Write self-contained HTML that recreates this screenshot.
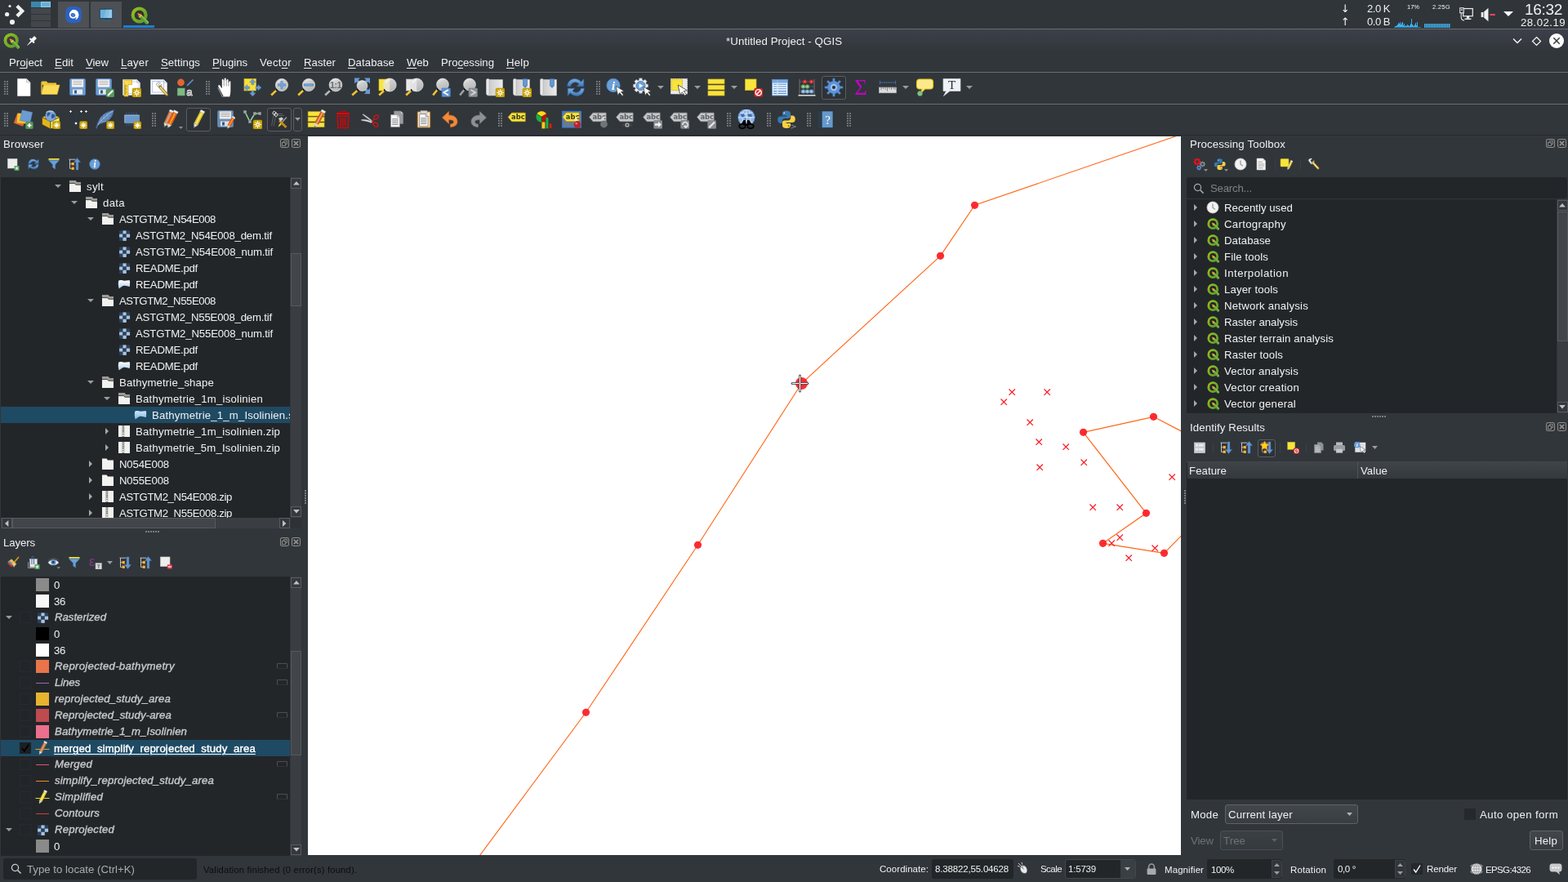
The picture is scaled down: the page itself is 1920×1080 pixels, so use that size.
<!DOCTYPE html>
<html lang="en"><head><meta charset="utf-8"><title>*Untitled Project - QGIS</title>
<style>
html,body{margin:0;padding:0;background:#31363b;}
body{width:1920px;height:1080px;overflow:hidden;font-family:"Liberation Sans",sans-serif;}
#root{will-change:transform;position:relative;width:1920px;height:1080px;overflow:hidden;background:#31363b;}
#root>div,#root>svg,#root>span{position:absolute;display:block;}
.t{white-space:pre;}
u{text-decoration:underline;text-underline-offset:2px;text-decoration-thickness:1px;}
</style></head>
<body>
<svg width="0" height="0" style="position:absolute"><defs>
<linearGradient id="gq" x1="0" y1="0" x2="1" y2="1"><stop offset="0" stop-color="#93c01f"/><stop offset="1" stop-color="#5e9b2c"/></linearGradient>
<linearGradient id="glens" x1="0.2" y1="0" x2="0.7" y2="1"><stop offset="0" stop-color="#eeeeee"/><stop offset="0.35" stop-color="#cdcdcd"/><stop offset="1" stop-color="#b4b6b8"/></linearGradient>
<linearGradient id="gscroll" x1="0" y1="0" x2="1" y2="0"><stop offset="0" stop-color="#f4f4f4"/><stop offset="0.25" stop-color="#cfcfcf"/><stop offset="1" stop-color="#ececec"/></linearGradient>
<linearGradient id="gblue" x1="0" y1="0" x2="0" y2="1"><stop offset="0" stop-color="#7fb0e0"/><stop offset="1" stop-color="#3d78b8"/></linearGradient>
<linearGradient id="gv" x1="0" y1="0" x2="0" y2="1"><stop offset="0" stop-color="#ffffff"/><stop offset="1" stop-color="#a9cbea"/></linearGradient>
<linearGradient id="gv2" x1="0" y1="0" x2="0" y2="1"><stop offset="0" stop-color="#cfe6fa"/><stop offset="1" stop-color="#7db6e6"/></linearGradient>
</defs></svg>
<div id="root">
<div style="left:0px;top:0px;width:1920px;height:35px;background:#303539;"></div>
<div style="left:0px;top:35px;width:1920px;height:1px;background:#696c71;"></div>
<svg style="left:4px;top:4px;" width="28" height="28" viewBox="0 0 28 28"><circle cx="8" cy="3.5" r="1.6" fill="#f0f0f1"/><circle cx="4.6" cy="13.5" r="2.6" fill="#f0f0f1"/><circle cx="11" cy="23" r="3.1" fill="#f0f0f1"/><path d="M18.3 1.8L26.2 9.5L18.5 17.2L15.4 14.2L20.2 9.5L15.4 4.8Z" fill="#f0f0f1"/></svg>
<div style="left:38px;top:2px;width:24px;height:7px;background:#3a87ad;"></div>
<div style="left:50px;top:2px;width:12px;height:7px;background:#67b0d6;box-sizing:border-box;border:1px solid #8fcbe8;"></div>
<div style="left:38px;top:10px;width:24px;height:7px;background:#43474c;"></div>
<div style="left:38px;top:18px;width:24px;height:7px;background:#43474c;"></div>
<div style="left:38px;top:26px;width:24px;height:7px;background:#43474c;"></div>
<div style="left:71px;top:2px;width:38px;height:32px;background:#4d5156;"></div>
<div style="left:111px;top:2px;width:38px;height:32px;background:#4d5156;"></div>
<div style="left:151px;top:31px;width:38px;height:3px;background:#1d7fd1;"></div>
<svg style="left:79.0px;top:7.0px;" width="22" height="22" viewBox="0 0 24 24"><rect x="1.5" y="1" width="21" height="22" rx="7" fill="#2a62c4"/><path d="M12 5.2C16.6 5.2 19.2 8.6 19 12.6C18.8 16.6 16 18.8 14.4 18.6C15.6 17.6 16 16.2 15.6 15C14.8 16.6 12.6 17.4 10.4 17C8 16.6 6.4 14.6 6.4 11.8C6.4 9.6 7.4 8.2 8.4 7.4C9 6.6 10.4 5.2 12 5.2Z" fill="#ffffff"/><path d="M8.5 10.5C10 9.6 12.4 9.8 13.8 11C14.8 12 14.6 13.8 13.4 14.6C11.8 15.4 9.6 15 8.6 13.6C8.2 12.6 8.2 11.4 8.5 10.5Z" fill="#2a62c4"/><path d="M9.4 11.4L11.4 13L13.4 11.6" stroke="#9cc0f0" stroke-width="0.8" fill="none"/></svg>
<svg style="left:119.0px;top:7.0px;" width="22" height="22" viewBox="0 0 24 24"><rect x="3.5" y="4.5" width="17" height="12.5" rx="0.6" fill="#6fb0dc" stroke="#1f4a5e" stroke-width="1.2"/><path d="M12 5.2H16.5L13.5 16.4H9Z" fill="#8fc4e6" opacity="0.7"/><path d="M16.5 5.2H19.8V16.4H13.5Z" fill="#9fd0ee" opacity="0.8"/><rect x="9.5" y="17.6" width="5" height="1.4" fill="#1f4a5e"/><rect x="7" y="19" width="10" height="1.6" fill="#3a5f73"/></svg>
<svg style="left:159.5px;top:7.5px;" width="22" height="22" viewBox="0 0 24 24"><circle cx="11.6" cy="11.4" r="8.7" fill="none" stroke="url(#gq)" stroke-width="4.5"/><g transform="translate(11.4 11.2) rotate(45)"><path d="M2.6 -2.3H16.6V2.3H2.6Z" fill="#5f9e35"/><path d="M2.6 -2.3H16.6V-0.4H2.6Z" fill="#86bd4c"/><path d="M-3.4 0L1.6 -2.3V2.3Z" fill="#f47b1c"/><path d="M1.4 -2.3H3V2.3H1.4Z" fill="#f8cf3a"/><path d="M-3.4 0L1.6 -2.3V-0.6Z" fill="#f9a04a"/></g></svg>
<span class="t" style="left:1641.8px;top:0.5px;line-height:20px;font-size:13px;color:#f4f5f6;font-family:'DejaVu Sans','Liberation Sans',sans-serif;">↓</span>
<span class="t" style="left:1641.8px;top:16.5px;line-height:20px;font-size:13px;color:#f4f5f6;font-family:'DejaVu Sans','Liberation Sans',sans-serif;">↑</span>
<span class="t" style="left:1674px;top:1px;line-height:20px;font-size:13px;color:#eff0f1;letter-spacing:-0.47px;">2.0 K</span>
<span class="t" style="left:1674px;top:17px;line-height:20px;font-size:13px;color:#eff0f1;letter-spacing:-0.47px;">0.0 B</span>
<span class="t" style="left:1723px;top:-1px;line-height:20px;font-size:7.5px;color:#eff0f1;letter-spacing:-0.01px;">17%</span>
<span class="t" style="left:1754px;top:-1px;line-height:20px;font-size:7.5px;color:#eff0f1;letter-spacing:0.31px;">2.25G</span>
<svg style="left:1707px;top:22px;" width="33" height="12" viewBox="0 0 33 12"><rect x="1" y="10" width="1" height="1" fill="#3daee9"/><rect x="2" y="10" width="1" height="1" fill="#3daee9"/><rect x="3" y="9" width="1" height="2" fill="#3daee9"/><rect x="4" y="8" width="1" height="3" fill="#3daee9"/><rect x="5" y="6" width="1" height="5" fill="#3daee9"/><rect x="6" y="7" width="1" height="4" fill="#3daee9"/><rect x="7" y="5" width="1" height="6" fill="#3daee9"/><rect x="8" y="8" width="1" height="3" fill="#3daee9"/><rect x="9" y="6" width="1" height="5" fill="#3daee9"/><rect x="10" y="5" width="1" height="6" fill="#3daee9"/><rect x="11" y="9" width="1" height="2" fill="#3daee9"/><rect x="12" y="7" width="1" height="4" fill="#3daee9"/><rect x="13" y="10" width="1" height="1" fill="#3daee9"/><rect x="14" y="9" width="1" height="2" fill="#3daee9"/><rect x="15" y="10" width="1" height="1" fill="#3daee9"/><rect x="16" y="8" width="1" height="3" fill="#3daee9"/><rect x="17" y="9" width="1" height="2" fill="#3daee9"/><rect x="18" y="10" width="1" height="1" fill="#3daee9"/><rect x="19" y="9" width="1" height="2" fill="#3daee9"/><rect x="20" y="7" width="1" height="4" fill="#3daee9"/><rect x="21" y="1" width="1" height="10" fill="#3daee9"/><rect x="22" y="8" width="1" height="3" fill="#3daee9"/><rect x="23" y="9" width="1" height="2" fill="#3daee9"/><rect x="24" y="10" width="1" height="1" fill="#3daee9"/><rect x="25" y="8" width="1" height="3" fill="#3daee9"/><rect x="26" y="6" width="1" height="5" fill="#3daee9"/><rect x="27" y="9" width="1" height="2" fill="#3daee9"/><rect x="28" y="5" width="1" height="6" fill="#3daee9"/><rect x="0" y="11" width="33" height="1" fill="#2a7fb0"/></svg>
<svg style="left:1744px;top:29px;" width="33" height="5" viewBox="0 0 33 5"><rect x="0" y="0" width="1.5" height="5" fill="#3daee9"/><rect x="2" y="0" width="1.5" height="5" fill="#3daee9"/><rect x="4" y="0" width="1.5" height="5" fill="#3daee9"/><rect x="6" y="0" width="1.5" height="5" fill="#3daee9"/><rect x="8" y="0" width="1.5" height="5" fill="#3daee9"/><rect x="10" y="0" width="1.5" height="5" fill="#3daee9"/><rect x="12" y="0" width="1.5" height="5" fill="#3daee9"/><rect x="14" y="0" width="1.5" height="5" fill="#3daee9"/><rect x="16" y="0" width="1.5" height="5" fill="#3daee9"/><rect x="18" y="0" width="1.5" height="5" fill="#3daee9"/><rect x="20" y="0" width="1.5" height="5" fill="#3daee9"/><rect x="22" y="0" width="1.5" height="5" fill="#3daee9"/><rect x="24" y="0" width="1.5" height="5" fill="#3daee9"/><rect x="26" y="0" width="1.5" height="5" fill="#3daee9"/><rect x="28" y="0" width="1.5" height="5" fill="#3daee9"/><rect x="30" y="0" width="1.5" height="5" fill="#3daee9"/></svg>
<svg style="left:1785.5px;top:8.0px;" width="19" height="19" viewBox="0 0 24 24"><rect x="7.2" y="3.2" width="14.6" height="11.6" fill="none" stroke="#eff0f1" stroke-width="1.5"/><rect x="12.5" y="15" width="4" height="3.4" fill="#eff0f1"/><rect x="9.5" y="18.4" width="10" height="1.8" fill="#eff0f1"/><rect x="2.2" y="2.2" width="5.6" height="7.6" fill="#303539" stroke="#eff0f1" stroke-width="1.3"/><rect x="4" y="4.2" width="2" height="2" fill="#eff0f1"/><path d="M4 10V16.5C4 19.5 6 21.5 9 21.5" stroke="#eff0f1" stroke-width="1.3" fill="none"/></svg>
<svg style="left:1811.5px;top:8.0px;" width="20" height="20" viewBox="0 0 24 24"><path d="M2 8.5H5.5L12.5 2V22L5.5 15.5H2Z" fill="#eff0f1"/><path d="M5.8 8.5V15.5" stroke="#303539" stroke-width="1"/><rect x="15" y="10.7" width="7.5" height="2.6" fill="#e8445a"/></svg>
<svg style="left:1841.0px;top:14.0px;" width="12" height="6" viewBox="0 0 12 6"><path d="M0 0H12L6.0 6Z" fill="#fcfcfc"/></svg>
<span class="t" style="left:1867px;top:1.5px;line-height:20px;font-size:19px;color:#eff0f1;letter-spacing:-0.31px;">16:32</span>
<span class="t" style="left:1862px;top:17.5px;line-height:20px;font-size:13.2px;color:#eff0f1;letter-spacing:0.46px;">28.02.19</span>
<div style="left:0px;top:36px;width:1920px;height:28px;background:linear-gradient(#3c4049,#31363b);"></div>
<svg style="left:4.0px;top:40.0px;" width="20" height="20" viewBox="0 0 24 24"><circle cx="11.6" cy="11.4" r="8.7" fill="none" stroke="url(#gq)" stroke-width="4.5"/><g transform="translate(11.4 11.2) rotate(45)"><path d="M2.6 -2.3H16.6V2.3H2.6Z" fill="#5f9e35"/><path d="M2.6 -2.3H16.6V-0.4H2.6Z" fill="#86bd4c"/><path d="M-3.4 0L1.6 -2.3V2.3Z" fill="#f47b1c"/><path d="M1.4 -2.3H3V2.3H1.4Z" fill="#f8cf3a"/><path d="M-3.4 0L1.6 -2.3V-0.6Z" fill="#f9a04a"/></g></svg>
<svg style="left:31.5px;top:42.5px;" width="14" height="14" viewBox="0 0 24 24"><g transform="rotate(45 12 12)"><rect x="8.4" y="1" width="7.2" height="9" rx="1.2" fill="#fcfcfc"/><rect x="5.6" y="9.6" width="12.8" height="3.6" rx="0.6" fill="#fcfcfc"/><path d="M10.6 13H13.4L12 25Z" fill="#fcfcfc" stroke="#fcfcfc" stroke-width="0.8"/></g></svg>
<span class="t" style="left:889px;top:41px;line-height:20px;font-size:13.3px;color:#eff0f1;letter-spacing:0.07px;">*Untitled Project - QGIS</span>
<svg style="left:1852px;top:45px;" width="12" height="10" viewBox="0 0 12 10"><path d="M1 2.5L6 7.5L11 2.5" fill="none" stroke="#fcfcfc" stroke-width="1.3"/></svg>
<svg style="left:1875px;top:44px;" width="13" height="13" viewBox="0 0 13 13"><path d="M6.5 1.5L11.5 6.5L6.5 11.5L1.5 6.5Z" fill="none" stroke="#fcfcfc" stroke-width="1.2"/></svg>
<svg style="left:1897px;top:41px;" width="18" height="18" viewBox="0 0 18 18"><circle cx="9" cy="9" r="9" fill="#fcfcfc"/><path d="M5.3 5.3L12.7 12.7M12.7 5.3L5.3 12.7" stroke="#31363b" stroke-width="1.4"/></svg>
<span class="t" style="left:11px;top:67px;line-height:20px;font-size:13.2px;color:#eff0f1;letter-spacing:-0.01px;">Pr<u>o</u>ject</span>
<span class="t" style="left:67px;top:67px;line-height:20px;font-size:13.2px;color:#eff0f1;letter-spacing:0.07px;"><u>E</u>dit</span>
<span class="t" style="left:105px;top:67px;line-height:20px;font-size:13.2px;color:#eff0f1;letter-spacing:-0.09px;"><u>V</u>iew</span>
<span class="t" style="left:148px;top:67px;line-height:20px;font-size:13.2px;color:#eff0f1;letter-spacing:0.2px;"><u>L</u>ayer</span>
<span class="t" style="left:197px;top:67px;line-height:20px;font-size:13.2px;color:#eff0f1;letter-spacing:0.04px;"><u>S</u>ettings</span>
<span class="t" style="left:260px;top:67px;line-height:20px;font-size:13.2px;color:#eff0f1;letter-spacing:-0.04px;"><u>P</u>lugins</span>
<span class="t" style="left:318px;top:67px;line-height:20px;font-size:13.2px;color:#eff0f1;letter-spacing:0.27px;">Vect<u>o</u>r</span>
<span class="t" style="left:372px;top:67px;line-height:20px;font-size:13.2px;color:#eff0f1;letter-spacing:0.03px;"><u>R</u>aster</span>
<span class="t" style="left:426px;top:67px;line-height:20px;font-size:13.2px;color:#eff0f1;letter-spacing:0.07px;"><u>D</u>atabase</span>
<span class="t" style="left:498px;top:67px;line-height:20px;font-size:13.2px;color:#eff0f1;letter-spacing:0.04px;"><u>W</u>eb</span>
<span class="t" style="left:540px;top:67px;line-height:20px;font-size:13.2px;color:#eff0f1;letter-spacing:-0.03px;">Pro<u>c</u>essing</span>
<span class="t" style="left:620px;top:67px;line-height:20px;font-size:13.2px;color:#eff0f1;letter-spacing:0.22px;"><u>H</u>elp</span>
<div style="left:0px;top:88px;width:1920px;height:1px;background:#6b6e72;"></div>
<div style="left:0px;top:127px;width:1920px;height:1px;background:#6b6e72;"></div>
<div style="left:0px;top:165px;width:1920px;height:1px;background:#26292d;"></div>
<svg style="left:5px;top:99px;" width="5" height="17" viewBox="0 0 5 17"><rect x="0" y="0" width="2" height="2" fill="#6f7377"/><rect x="3" y="0" width="2" height="2" fill="#6f7377"/><rect x="0" y="3" width="2" height="2" fill="#6f7377"/><rect x="3" y="3" width="2" height="2" fill="#6f7377"/><rect x="0" y="6" width="2" height="2" fill="#6f7377"/><rect x="3" y="6" width="2" height="2" fill="#6f7377"/><rect x="0" y="9" width="2" height="2" fill="#6f7377"/><rect x="3" y="9" width="2" height="2" fill="#6f7377"/><rect x="0" y="12" width="2" height="2" fill="#6f7377"/><rect x="3" y="12" width="2" height="2" fill="#6f7377"/><rect x="0" y="15" width="2" height="2" fill="#6f7377"/><rect x="3" y="15" width="2" height="2" fill="#6f7377"/></svg>
<svg style="left:17.0px;top:95.0px;" width="24" height="24" viewBox="0 0 24 24"><path d="M4.5 1.5H15.5L20 6V22.5H4.5Z" fill="#ffffff" stroke="#d0d0d0" stroke-width="0.8"/><path d="M15.5 1.5V6H20" fill="#e4e4e4" stroke="#bdbdbd" stroke-width="0.7"/></svg>
<svg style="left:50.0px;top:95.0px;" width="24" height="24" viewBox="0 0 24 24"><path d="M1 4.5H7L8.5 6.5H19V9H1Z" fill="#edc53a"/><path d="M1 6V20.5H20L23 9H3.5L1 18Z" fill="#fbdc55" stroke="#e2b935" stroke-width="0.6" stroke-linejoin="round"/><path d="M1 5V20.5" stroke="#e6bd38" stroke-width="0.8"/></svg>
<svg style="left:83.0px;top:95.0px;" width="24" height="24" viewBox="0 0 24 24"><rect x="2.5" y="1.5" width="19" height="20" rx="1.5" fill="#6d9dd2" stroke="#4f7fb6" stroke-width="1"/><rect x="5" y="2.5" width="14" height="9" fill="#f6f6f6" stroke="#d4d4d4" stroke-width="0.5"/><path d="M6.5 4.5h11M6.5 6.5h11M6.5 8.5h11" stroke="#8a8a8a" stroke-width="0.6"/><rect x="6" y="14.5" width="12" height="6" fill="#eaeaea"/><rect x="8" y="15.5" width="3" height="4" fill="#2f5f95"/></svg>
<svg style="left:116.0px;top:95.0px;" width="24" height="24" viewBox="0 0 24 24"><g transform="translate(-1 0)"><rect x="2.5" y="1.5" width="19" height="20" rx="1.5" fill="#6d9dd2" stroke="#4f7fb6" stroke-width="1"/><rect x="5" y="2.5" width="14" height="9" fill="#f6f6f6" stroke="#d4d4d4" stroke-width="0.5"/><path d="M6.5 4.5h11M6.5 6.5h11M6.5 8.5h11" stroke="#8a8a8a" stroke-width="0.6"/><rect x="6" y="14.5" width="12" height="6" fill="#eaeaea"/><rect x="8" y="15.5" width="3" height="4" fill="#2f5f95"/></g><rect x="14" y="14" width="10" height="10" rx="1.8" fill="#5a9a5f" stroke="#3f7f48" stroke-width="0.6"/><path d="M16.5 21.5L21.5 16.5" stroke="#fff" stroke-width="2" stroke-linecap="round"/></svg>
<svg style="left:149.0px;top:95.0px;" width="24" height="24" viewBox="0 0 24 24"><path d="M1.5 2.5H18.5L22.5 6.5V21.5H1.5Z" fill="#ffffff" stroke="#c8c8c8" stroke-width="0.7"/><path d="M18.5 2.5V6.5H22.5" fill="#eeeeee" stroke="#bdbdbd" stroke-width="0.6"/><path d="M4 5H21V19.5H4Z" fill="none" stroke="#b9c9f0" stroke-width="0.8"/><path d="M3 3H12.5V8.5H8V23H3Z" fill="#f8d84a" stroke="#c9a21a" stroke-width="0.7"/><path d="M3.5 3.5L8 8" stroke="#fbe9a0" stroke-width="0.7"/><path d="M3.4 10h2.8M3.4 12h2M3.4 14h2.8M3.4 16h2M3.4 18h2.8M3.4 20h2" stroke="#6a5408" stroke-width="0.7"/><rect x="13" y="13" width="11" height="11" rx="1.8" fill="#c9a300" stroke="#b08e00" stroke-width="0.5"/><path d="M14.10 18.50L22.90 18.50M15.64 15.64L21.36 21.36M18.50 14.10L18.50 22.90M21.36 15.64L15.64 21.36" stroke="#fffbe8" stroke-width="1.05" fill="none"/><circle cx="18.5" cy="18.5" r="2.20" fill="#fffbe8"/><circle cx="18.5" cy="18.5" r="1.10" fill="#c9a300"/></svg>
<svg style="left:182.0px;top:95.0px;" width="24" height="24" viewBox="0 0 24 24"><path d="M2.5 2.5H18.5L22.5 6.5V20.5H2.5Z" fill="#ffffff" stroke="#c8c8c8" stroke-width="0.7"/><path d="M18.5 2.5V6.5H22.5" fill="#e8e8e8" stroke="#bdbdbd" stroke-width="0.6"/><rect x="4.5" y="4.5" width="14" height="13.5" fill="none" stroke="#a8bdf2" stroke-width="0.9"/><path d="M9.5 8.5A3 3 0 0 1 14.6 6.4L12.4 8.6L13.6 10.2L16 8A3 3 0 0 1 13 11.8L11.4 11.2Z" fill="#e9e9e9" stroke="#8a8a8a" stroke-width="0.6"/><path d="M14 11.5L22.5 21" stroke="#8a6d1c" stroke-width="3.4" stroke-linecap="round"/><path d="M14.4 12L22 20.6" stroke="#ecd27a" stroke-width="2" stroke-linecap="round"/></svg>
<svg style="left:215.0px;top:95.0px;" width="24" height="24" viewBox="0 0 24 24"><circle cx="6.5" cy="6" r="4.4" fill="#e0672f"/><path d="M14 10L21.5 2.5" stroke="#5a8fd0" stroke-width="1.7"/><rect x="2.2" y="13" width="9" height="9" fill="#7fb983" stroke="#5d9b66" stroke-width="0.5"/><text x="13.3" y="22" font-family="Liberation Sans, sans-serif" font-size="13" fill="none" stroke="#f3f3f3" stroke-width="0.75">a</text></svg>
<svg style="left:252px;top:99px;" width="5" height="17" viewBox="0 0 5 17"><rect x="0" y="0" width="2" height="2" fill="#6f7377"/><rect x="3" y="0" width="2" height="2" fill="#6f7377"/><rect x="0" y="3" width="2" height="2" fill="#6f7377"/><rect x="3" y="3" width="2" height="2" fill="#6f7377"/><rect x="0" y="6" width="2" height="2" fill="#6f7377"/><rect x="3" y="6" width="2" height="2" fill="#6f7377"/><rect x="0" y="9" width="2" height="2" fill="#6f7377"/><rect x="3" y="9" width="2" height="2" fill="#6f7377"/><rect x="0" y="12" width="2" height="2" fill="#6f7377"/><rect x="3" y="12" width="2" height="2" fill="#6f7377"/><rect x="0" y="15" width="2" height="2" fill="#6f7377"/><rect x="3" y="15" width="2" height="2" fill="#6f7377"/></svg>
<svg style="left:264.0px;top:95.0px;" width="24" height="24" viewBox="0 0 24 24"><path d="M9.6 23.6L3.2 11.6C2 9.2 4.2 7.6 5.8 9.6L7.4 12.4V3.2C7.4 1 10.2 1 10.2 3.2V2C10.2 -0.2 13.2 -0.2 13.2 2V3.2C13.2 1.2 16 1.2 16 3.2V5.4C16 3.6 18.8 3.6 18.8 5.6V15C18.8 18.4 18.2 21 17.6 23.6Z" fill="#ffffff" stroke="#1f1f1f" stroke-width="0.7" stroke-linejoin="round"/><path d="M10.2 3V10.5M13.2 2.5V10.5M16 4V10.5" stroke="#6a6a6a" stroke-width="0.7"/><path d="M2.8 12.4L8.6 23.9H17.4" fill="none" stroke="#e8e8e8" stroke-width="0.6"/></svg>
<svg style="left:297.0px;top:95.0px;" width="24" height="24" viewBox="0 0 24 24"><rect x="2" y="1.5" width="14.5" height="14.5" fill="#f6e03a" stroke="#d2b51e" stroke-width="0.7"/><g transform="translate(1.2 1.2) scale(0.93)"><path d="M12 0.5L16 5H13.5V8H10.5V5H8Z" fill="#6a9ad0" stroke="#4f80b8" stroke-width="0.5"/><path d="M12 23.5L16 19H13.5V16H10.5V19H8Z" fill="#6a9ad0" stroke="#4f80b8" stroke-width="0.5"/><path d="M23.5 12L19 8V10.5H16V13.5H19V16Z" fill="#6a9ad0" stroke="#4f80b8" stroke-width="0.5"/><path d="M0.5 12L5 8V10.5H8V13.5H5V16Z" fill="#6a9ad0" stroke="#4f80b8" stroke-width="0.5"/></g></svg>
<svg style="left:330.0px;top:95.0px;" width="24" height="24" viewBox="0 0 24 24"><path d="M8.1 15.9L2.2 21.5" stroke="#f3c331" stroke-width="2.6" stroke-linecap="butt"/><circle cx="9.2" cy="14.8" r="1.3" fill="#0a0a0a"/><circle cx="15" cy="9" r="7.6" fill="url(#glens)" stroke="#e4e4e4" stroke-width="0.7"/><path d="M15 4.2V13.8M10.2 9H19.8" stroke="#4f84c0" stroke-width="2.9"/><path d="M15 4.8V13.2M10.8 9H19.2" stroke="#7aa8dc" stroke-width="1.5"/></svg>
<svg style="left:363.0px;top:95.0px;" width="24" height="24" viewBox="0 0 24 24"><path d="M8.1 15.9L2.2 21.5" stroke="#f3c331" stroke-width="2.6" stroke-linecap="butt"/><circle cx="9.2" cy="14.8" r="1.3" fill="#0a0a0a"/><circle cx="15" cy="9" r="7.6" fill="url(#glens)" stroke="#e4e4e4" stroke-width="0.7"/><path d="M10.2 9H19.8" stroke="#4f84c0" stroke-width="2.9" stroke-linecap="round"/><path d="M10.6 9H19.4" stroke="#7aa8dc" stroke-width="1.5" stroke-linecap="round"/></svg>
<svg style="left:396.0px;top:95.0px;" width="24" height="24" viewBox="0 0 24 24"><path d="M7.9 16.1L2.2 21.5" stroke="#b5b7b9" stroke-width="2.6" stroke-linecap="butt"/><circle cx="9.0" cy="15.0" r="1.3" fill="#0a0a0a"/><circle cx="15" cy="9" r="7.9" fill="url(#glens)" stroke="#e4e4e4" stroke-width="0.7"/><text x="15" y="13" text-anchor="middle" font-family="Liberation Sans, sans-serif" font-weight="bold" font-size="10.8" fill="#6c6f72" letter-spacing="-0.6">1:1</text></svg>
<svg style="left:429.0px;top:95.0px;" width="24" height="24" viewBox="0 0 24 24"><path d="M5 0.5H12L9.8 2.7L12.5 5.4L10 7.9L7.3 5.2L5 7.5Z" fill="#6a9ad0"/><path d="M24 0.5V7.5L21.7 5.2L19 7.9L16.5 5.4L19.2 2.7L17 0.5Z" fill="#6a9ad0"/><path d="M24 20H17L19.2 17.8L16.5 15.1L19 12.6L21.7 15.3L24 13Z" fill="#6a9ad0"/><path d="M8.4 16.1L2.2 21.5" stroke="#f3c331" stroke-width="2.6" stroke-linecap="butt"/><circle cx="9.5" cy="15.0" r="1.3" fill="#0a0a0a"/><circle cx="14.5" cy="10" r="6.4" fill="url(#glens)" stroke="#e4e4e4" stroke-width="0.7"/></svg>
<svg style="left:462.0px;top:95.0px;" width="24" height="24" viewBox="0 0 24 24"><rect x="2" y="2" width="9" height="14" fill="#f8e43d" stroke="#d2b51e" stroke-width="0.6"/><path d="M8.0 16.2L2.2 21.5" stroke="#f3c331" stroke-width="2.6" stroke-linecap="butt"/><circle cx="9.1" cy="15.1" r="1.3" fill="#0a0a0a"/><circle cx="15.2" cy="9" r="8" fill="url(#glens)" stroke="#e4e4e4" stroke-width="0.7"/><path d="M15.2 1A8 8 0 0 0 15.2 17Z" fill="#ece8c6" opacity="0.85"/><path d="M10.24 6.20A6.00 6.00 0 0 1 14.40 3.24" fill="none" stroke="#ffffff" stroke-width="1.1" stroke-linecap="round" opacity="0.9"/></svg>
<svg style="left:495.0px;top:95.0px;" width="24" height="24" viewBox="0 0 24 24"><rect x="2.5" y="2" width="9" height="14" fill="#e9e9e9" stroke="#c2c2c2" stroke-width="0.6"/><path d="M8.0 16.2L2.2 21.5" stroke="#f3c331" stroke-width="2.6" stroke-linecap="butt"/><circle cx="9.1" cy="15.1" r="1.3" fill="#0a0a0a"/><circle cx="15.2" cy="9" r="8" fill="url(#glens)" stroke="#e4e4e4" stroke-width="0.7"/><path d="M15.2 1A8 8 0 0 0 15.2 17Z" fill="#e6e6e6" opacity="0.85"/><path d="M10.24 6.20A6.00 6.00 0 0 1 14.40 3.24" fill="none" stroke="#ffffff" stroke-width="1.1" stroke-linecap="round" opacity="0.9"/></svg>
<svg style="left:528.0px;top:95.0px;" width="24" height="24" viewBox="0 0 24 24"><path d="M7.2 15.3L2.2 21.5" stroke="#f3c331" stroke-width="2.6" stroke-linecap="butt"/><circle cx="8.3" cy="14.2" r="1.3" fill="#0a0a0a"/><circle cx="14" cy="8.5" r="7.4" fill="url(#glens)" stroke="#e4e4e4" stroke-width="0.7"/><rect x="13" y="13" width="10.5" height="10.5" rx="0.8" fill="#5d95d2" stroke="#3f77b5" stroke-width="0.6"/><path d="M21 15L15.5 18.3L21 21.6" fill="none" stroke="#fff" stroke-width="1.8"/></svg>
<svg style="left:561.0px;top:95.0px;" width="24" height="24" viewBox="0 0 24 24"><path d="M7.2 15.3L2.2 21.5" stroke="#9ea0a2" stroke-width="2.6" stroke-linecap="butt"/><circle cx="8.3" cy="14.2" r="1.3" fill="#0a0a0a"/><circle cx="14" cy="8.5" r="7.4" fill="url(#glens)" stroke="#e4e4e4" stroke-width="0.7"/><rect x="13" y="13" width="10.5" height="10.5" rx="0.8" fill="#8e9194" stroke="#7a7d80" stroke-width="0.6"/><path d="M15.5 15L21 18.3L15.5 21.6" fill="none" stroke="#d6d6d6" stroke-width="1.8"/></svg>
<svg style="left:594.0px;top:95.0px;" width="24" height="24" viewBox="0 0 24 24"><path d="M3 1.5C1.8 1.5 1.5 2.5 1.5 3.5V19C1.5 21 2.5 22 4.5 22H21.5V2.5H5.5C5 1.8 4 1.5 3 1.5Z" fill="url(#gscroll)" stroke="#bdbdbd" stroke-width="0.6"/><path d="M5.5 2.5V19.5C5.5 20.5 4.5 21.5 3.5 21.5" fill="none" stroke="#b4b4b4" stroke-width="0.7"/><rect x="13" y="13" width="11" height="11" rx="1.8" fill="#c9a300" stroke="#b08e00" stroke-width="0.5"/><path d="M14.10 18.50L22.90 18.50M15.64 15.64L21.36 21.36M18.50 14.10L18.50 22.90M21.36 15.64L15.64 21.36" stroke="#fffbe8" stroke-width="1.05" fill="none"/><circle cx="18.5" cy="18.5" r="2.20" fill="#fffbe8"/><circle cx="18.5" cy="18.5" r="1.10" fill="#c9a300"/></svg>
<svg style="left:627.0px;top:95.0px;" width="24" height="24" viewBox="0 0 24 24"><path d="M3 1.5C1.8 1.5 1.5 2.5 1.5 3.5V19C1.5 21 2.5 22 4.5 22H21.5V2.5H5.5C5 1.8 4 1.5 3 1.5Z" fill="url(#gscroll)" stroke="#bdbdbd" stroke-width="0.6"/><path d="M5.5 2.5V19.5C5.5 20.5 4.5 21.5 3.5 21.5" fill="none" stroke="#b4b4b4" stroke-width="0.7"/><path d="M13.5 1.5H18.5V10L16 12.5L13.5 10Z" fill="#4f87c7" stroke="#376ba8" stroke-width="0.5"/><path d="M15 2V10M17 2V10" stroke="#8fb8e6" stroke-width="0.7"/><rect x="13" y="13" width="11" height="11" rx="1.8" fill="#c9a300" stroke="#b08e00" stroke-width="0.5"/><path d="M14.10 18.50L22.90 18.50M15.64 15.64L21.36 21.36M18.50 14.10L18.50 22.90M21.36 15.64L15.64 21.36" stroke="#fffbe8" stroke-width="1.05" fill="none"/><circle cx="18.5" cy="18.5" r="2.20" fill="#fffbe8"/><circle cx="18.5" cy="18.5" r="1.10" fill="#c9a300"/></svg>
<svg style="left:660.0px;top:95.0px;" width="24" height="24" viewBox="0 0 24 24"><path d="M3 1.5C1.8 1.5 1.5 2.5 1.5 3.5V19C1.5 21 2.5 22 4.5 22H21.5V2.5H5.5C5 1.8 4 1.5 3 1.5Z" fill="url(#gscroll)" stroke="#bdbdbd" stroke-width="0.6"/><path d="M5.5 2.5V19.5C5.5 20.5 4.5 21.5 3.5 21.5" fill="none" stroke="#b4b4b4" stroke-width="0.7"/><path d="M13.5 1.5H18.5V10L16 12.5L13.5 10Z" fill="#4f87c7" stroke="#376ba8" stroke-width="0.5"/><path d="M15 2V10M17 2V10" stroke="#8fb8e6" stroke-width="0.7"/></svg>
<svg style="left:693.0px;top:95.0px;" width="24" height="24" viewBox="0 0 24 24"><g transform="translate(12 12) scale(1.14 1.2) translate(-12 -12)"><path d="M3 11C3 5.5 8 2.5 12.5 3.5C15 4 16.5 5 17.8 6.4L20.6 3.4V11H13L15.6 8.6C13.8 6.6 11 6.2 9 7.4C7.4 8.4 6.6 9.6 6.4 11Z" fill="url(#gblue)" stroke="#2f66a6" stroke-width="0.6"/><path d="M21 13C21 18.5 16 21.5 11.5 20.5C9 20 7.5 19 6.2 17.6L3.4 20.6V13H11L8.4 15.4C10.2 17.4 13 17.8 15 16.6C16.6 15.6 17.4 14.4 17.6 13Z" fill="url(#gblue)" stroke="#2f66a6" stroke-width="0.6"/></g></svg>
<svg style="left:730px;top:99px;" width="5" height="17" viewBox="0 0 5 17"><rect x="0" y="0" width="2" height="2" fill="#6f7377"/><rect x="3" y="0" width="2" height="2" fill="#6f7377"/><rect x="0" y="3" width="2" height="2" fill="#6f7377"/><rect x="3" y="3" width="2" height="2" fill="#6f7377"/><rect x="0" y="6" width="2" height="2" fill="#6f7377"/><rect x="3" y="6" width="2" height="2" fill="#6f7377"/><rect x="0" y="9" width="2" height="2" fill="#6f7377"/><rect x="3" y="9" width="2" height="2" fill="#6f7377"/><rect x="0" y="12" width="2" height="2" fill="#6f7377"/><rect x="3" y="12" width="2" height="2" fill="#6f7377"/><rect x="0" y="15" width="2" height="2" fill="#6f7377"/><rect x="3" y="15" width="2" height="2" fill="#6f7377"/></svg>
<svg style="left:741.0px;top:95.0px;" width="24" height="24" viewBox="0 0 24 24"><circle cx="10" cy="9.5" r="8.2" fill="#6a9fd8" stroke="#4d84c0" stroke-width="0.8"/><text x="10" y="14.6" text-anchor="middle" font-family="Liberation Serif, serif" font-style="italic" font-weight="bold" font-size="15" fill="#ffffff">i</text><g transform="translate(13.2 10.5) scale(0.95) rotate(-12)"><path d="M0 0L0 12L3 9.2L5.3 14L7.2 13L5 8.5L9 8.5Z" fill="#ffffff" stroke="#3a3a3a" stroke-width="0.7" stroke-linejoin="round"/></g></svg>
<svg style="left:774.0px;top:95.0px;" width="24" height="24" viewBox="0 0 24 24"><path d="M17.26 7.51L17.40 7.95L19.63 8.23L19.63 11.77L17.40 12.05L17.04 13.02L16.83 13.44L18.21 15.20L15.70 17.71L13.94 16.33L12.99 16.76L12.55 16.90L12.27 19.13L8.73 19.13L8.45 16.90L7.48 16.54L7.06 16.33L5.30 17.71L2.79 15.20L4.17 13.44L3.74 12.49L3.60 12.05L1.37 11.77L1.37 8.23L3.60 7.95L3.96 6.98L4.17 6.56L2.79 4.80L5.30 2.29L7.06 3.67L8.01 3.24L8.45 3.10L8.73 0.87L12.27 0.87L12.55 3.10L13.52 3.46L13.94 3.67L15.70 2.29L18.21 4.80L16.83 6.56Z" fill="#f1f1f1" stroke="#8d8d8d" stroke-width="0.6" stroke-linejoin="round"/><circle cx="10.5" cy="10" r="5.6" fill="#6a9fd8" stroke="#3f78b8" stroke-width="0.8"/><path d="M8.6 7.2L13.6 10L8.6 12.8Z" fill="#ffffff"/><g transform="translate(13.8 11.2) scale(0.9) rotate(-12)"><path d="M0 0L0 12L3 9.2L5.3 14L7.2 13L5 8.5L9 8.5Z" fill="#ffffff" stroke="#3a3a3a" stroke-width="0.7" stroke-linejoin="round"/></g></svg>
<svg style="left:805.0px;top:105.0px;" width="8" height="4" viewBox="0 0 8 4"><path d="M0 0H8L4.0 4Z" fill="#9a9c9e"/></svg>
<svg style="left:820.0px;top:95.0px;" width="24" height="24" viewBox="0 0 24 24"><rect x="1.5" y="1.5" width="20" height="18.5" fill="#e9e9e9" stroke="#f8f8f8" stroke-width="1" stroke-dasharray="1.2 1.2"/><rect x="2" y="2" width="13.5" height="13.5" fill="#f8e43d" stroke="#d4b81e" stroke-width="0.7"/><g transform="translate(10.2 9) scale(1.05) rotate(-12)"><path d="M0 0L0 12L3 9.2L5.3 14L7.2 13L5 8.5L9 8.5Z" fill="#ffffff" stroke="#3a3a3a" stroke-width="0.7" stroke-linejoin="round"/></g></svg>
<svg style="left:850.0px;top:105.0px;" width="8" height="4" viewBox="0 0 8 4"><path d="M0 0H8L4.0 4Z" fill="#9a9c9e"/></svg>
<svg style="left:865.0px;top:95.0px;" width="24" height="24" viewBox="0 0 24 24"><rect x="2" y="2" width="20" height="5.6" fill="#f8e43d" stroke="#d4b81e" stroke-width="0.7"/><rect x="2" y="9.2" width="20" height="5.6" fill="#f8e43d" stroke="#d4b81e" stroke-width="0.7"/><rect x="2" y="16.4" width="20" height="5.6" fill="#f8e43d" stroke="#d4b81e" stroke-width="0.7"/></svg>
<svg style="left:895.0px;top:105.0px;" width="8" height="4" viewBox="0 0 8 4"><path d="M0 0H8L4.0 4Z" fill="#9a9c9e"/></svg>
<svg style="left:910.0px;top:95.0px;" width="24" height="24" viewBox="0 0 24 24"><rect x="2.5" y="2" width="13.5" height="13.5" fill="#f8e43d" stroke="#d4b81e" stroke-width="0.7"/><rect x="13.5" y="13" width="10.5" height="10.5" rx="2" fill="#d42a2a" stroke="#a81616" stroke-width="0.5"/><circle cx="18.75" cy="18.25" r="3.6" fill="none" stroke="#ffffff" stroke-width="1.4"/><path d="M16.3 20.7L21.2 15.8" stroke="#ffffff" stroke-width="1.4"/></svg>
<svg style="left:943.0px;top:95.0px;" width="24" height="24" viewBox="0 0 24 24"><rect x="2.5" y="2.5" width="19" height="19.5" fill="#f4f8fd" stroke="#5a8fd0" stroke-width="1"/><rect x="3" y="3" width="18" height="3.6" fill="#7aa9de"/><path d="M4 8.2h4.2M9.6 8.2h10.4" stroke="#5a8fd0" stroke-width="1.1"/><path d="M4 11.0h4.2M9.6 11.0h10.4" stroke="#5a8fd0" stroke-width="1.1"/><path d="M4 13.799999999999999h4.2M9.6 13.799999999999999h10.4" stroke="#5a8fd0" stroke-width="1.1"/><path d="M4 16.599999999999998h4.2M9.6 16.599999999999998h10.4" stroke="#5a8fd0" stroke-width="1.1"/><path d="M4 19.4h4.2M9.6 19.4h10.4" stroke="#5a8fd0" stroke-width="1.1"/><path d="M8.9 3V22" stroke="#a9c6ea" stroke-width="0.6"/></svg>
<svg style="left:976.0px;top:95.0px;" width="24" height="24" viewBox="0 0 24 24"><path d="M3 2V21M21 2V21" stroke="#77797c" stroke-width="0.9"/><path d="M1.5 21.8H22.5" stroke="#d9d9d9" stroke-width="1.6"/><path d="M3 5H21M3 11H21M3 17H21" stroke="#6a6c6f" stroke-width="0.6"/><circle cx="9.5" cy="5" r="2.5" fill="#d8262c"/><circle cx="9.5" cy="5" r="0.8" fill="#f6b0b0"/><circle cx="17.5" cy="5" r="2.5" fill="#d8262c"/><circle cx="17.5" cy="5" r="0.8" fill="#f6b0b0"/><circle cx="7.5" cy="11" r="2.5" fill="#6fb76d"/><circle cx="7.5" cy="11" r="0.8" fill="#d6f0d0"/><circle cx="12.5" cy="11" r="2.5" fill="#6fb76d"/><circle cx="12.5" cy="11" r="0.8" fill="#d6f0d0"/><circle cx="7.5" cy="17" r="2.5" fill="#79abd8"/><circle cx="7.5" cy="17" r="0.8" fill="#e0effb"/><circle cx="12.5" cy="17" r="2.5" fill="#79abd8"/><circle cx="12.5" cy="17" r="0.8" fill="#e0effb"/><circle cx="17.5" cy="17" r="2.5" fill="#79abd8"/><circle cx="17.5" cy="17" r="0.8" fill="#e0effb"/></svg>
<div style="left:1006px;top:93px;width:30px;height:29px;background:#2e3237;box-sizing:border-box;border:1px solid #5a5e63;border-radius:3px;"></div>
<svg style="left:1009.0px;top:95.0px;" width="24" height="24" viewBox="0 0 24 24"><path d="M19.13 9.37L19.51 10.84L22.94 10.88L22.94 13.12L19.51 13.16L18.90 15.19L18.13 16.49L20.53 18.95L18.95 20.53L16.49 18.13L14.63 19.13L13.16 19.51L13.12 22.94L10.88 22.94L10.84 19.51L8.81 18.90L7.51 18.13L5.05 20.53L3.47 18.95L5.87 16.49L4.87 14.63L4.49 13.16L1.06 13.12L1.06 10.88L4.49 10.84L5.10 8.81L5.87 7.51L3.47 5.05L5.05 3.47L7.51 5.87L9.37 4.87L10.84 4.49L10.88 1.06L13.12 1.06L13.16 4.49L15.19 5.10L16.49 5.87L18.95 3.47L20.53 5.05L18.13 7.51Z" fill="#5c94d8" stroke="#4a82c8" stroke-width="0.6" stroke-linejoin="round"/><circle cx="12" cy="12" r="6.4" fill="#5c94d8"/><circle cx="12" cy="12" r="4.2" fill="#9dc0ea"/><circle cx="12" cy="12" r="2.1" fill="#2e3237"/></svg>
<svg style="left:1042.0px;top:95.0px;" width="24" height="24" viewBox="0 0 24 24"><text x="12" y="21" text-anchor="middle" font-family="Liberation Serif, serif" font-size="27" fill="#c400c4">Σ</text></svg>
<svg style="left:1075.0px;top:95.0px;" width="24" height="24" viewBox="0 0 24 24"><path d="M2.5 6H21.5M2.5 3.8V8.2M21.5 3.8V8.2" stroke="#40679a" stroke-width="1.2" fill="none"/><rect x="1.5" y="12" width="21" height="6.8" fill="#dcdcdc" stroke="#b9b9b9" stroke-width="0.6"/><path d="M4 12v3M6.5 12v2M9 12v3M11.5 12v4.5M14 12v2M16.5 12v3M19 12v2M21 12v3" stroke="#6e6e6e" stroke-width="0.8"/></svg>
<svg style="left:1105.0px;top:105.0px;" width="8" height="4" viewBox="0 0 8 4"><path d="M0 0H8L4.0 4Z" fill="#9a9c9e"/></svg>
<svg style="left:1120.0px;top:95.0px;" width="24" height="24" viewBox="0 0 24 24"><path d="M6 2H19C21 2 22.5 3.5 22.5 5.5V10.5C22.5 12.5 21 14 19 14H12.5L7.5 19L9 14H6C4 14 2.5 12.5 2.5 10.5V5.5C2.5 3.5 4 2 6 2Z" fill="#fce98a" stroke="#e6c619" stroke-width="1.1" stroke-linejoin="round"/><circle cx="6.5" cy="19.5" r="3" fill="#7fbf86" stroke="#63a66c" stroke-width="0.5"/></svg>
<svg style="left:1153.0px;top:95.0px;" width="24" height="24" viewBox="0 0 24 24"><path d="M2 1.5H23V16.5H10L2.5 22.5L5.5 16.5H2Z" fill="#eef3f7" stroke="#cfd4d8" stroke-width="0.7" stroke-linejoin="round"/><text x="12.6" y="14" text-anchor="middle" font-family="Liberation Serif, serif" font-size="15" fill="#2a2a2a">T</text></svg>
<svg style="left:1183.0px;top:105.0px;" width="8" height="4" viewBox="0 0 8 4"><path d="M0 0H8L4.0 4Z" fill="#9a9c9e"/></svg>
<svg style="left:5px;top:138px;" width="5" height="17" viewBox="0 0 5 17"><rect x="0" y="0" width="2" height="2" fill="#6f7377"/><rect x="3" y="0" width="2" height="2" fill="#6f7377"/><rect x="0" y="3" width="2" height="2" fill="#6f7377"/><rect x="3" y="3" width="2" height="2" fill="#6f7377"/><rect x="0" y="6" width="2" height="2" fill="#6f7377"/><rect x="3" y="6" width="2" height="2" fill="#6f7377"/><rect x="0" y="9" width="2" height="2" fill="#6f7377"/><rect x="3" y="9" width="2" height="2" fill="#6f7377"/><rect x="0" y="12" width="2" height="2" fill="#6f7377"/><rect x="3" y="12" width="2" height="2" fill="#6f7377"/><rect x="0" y="15" width="2" height="2" fill="#6f7377"/><rect x="3" y="15" width="2" height="2" fill="#6f7377"/></svg>
<svg style="left:17.0px;top:134.0px;" width="24" height="24" viewBox="0 0 24 24"><rect x="1.5" y="7" width="12" height="12" transform="rotate(20 7.5 13)" fill="#e0672f"/><rect x="4" y="5" width="12" height="12" transform="rotate(5 10 11)" fill="#f2c230"/><rect x="8.5" y="2" width="13" height="13" transform="rotate(12 15 8.5)" fill="#6c9bd2" stroke="#4f7fb6" stroke-width="0.4"/><rect x="14.5" y="15" width="9" height="9" rx="1.6" fill="#5a9a5f" stroke="#3f7f48" stroke-width="0.5"/><path d="M19 17V22M16.5 19.5H21.5" stroke="#fff" stroke-width="1.6"/></svg>
<svg style="left:50.0px;top:134.0px;" width="24" height="24" viewBox="0 0 24 24"><path d="M1.5 9.5L12 14.5V24L1.5 18.5Z" fill="#e3b31a" stroke="#3a3000" stroke-width="0.6" stroke-linejoin="round"/><path d="M12 14.5L23 9.5V19L12 24Z" fill="#fbe96a" stroke="#3a3000" stroke-width="0.6" stroke-linejoin="round"/><path d="M1.5 9.5L12 5L23 9.5L12 14.5Z" fill="#f5d43a" stroke="#3a3000" stroke-width="0.6" stroke-linejoin="round"/><circle cx="12" cy="8" r="6.6" fill="#7ea6d8" stroke="#3c6496" stroke-width="0.6"/><path d="M8 4.5C9.5 3 11 3.5 12 5C11 6.5 9.5 7.5 8.5 9C7.5 8 7 6 8 4.5ZM13.5 6C15 5 17 6 17.5 8C16.5 10 15 11.5 13.5 11C12.5 9.5 12.5 7.5 13.5 6Z" fill="#2f5a94"/><path d="M6.5 3.5C9 1.5 13 1.5 15.5 3" stroke="#d5e4f6" stroke-width="1" fill="none"/><rect x="14.5" y="14.5" width="9.5" height="9.5" rx="1.8" fill="#c9a300" stroke="#b08e00" stroke-width="0.5"/><path d="M15.45 19.25L23.05 19.25M16.78 16.78L21.72 21.72M19.25 15.45L19.25 23.05M21.72 16.78L16.78 21.72" stroke="#fffbe8" stroke-width="1.05" fill="none"/></svg>
<svg style="left:83.0px;top:134.0px;" width="24" height="24" viewBox="0 0 24 24"><path d="M3.5 2.5L10 17L16.5 2.5" fill="none" stroke="#1d3550" stroke-width="0.9"/><path d="M2 2.5h3M3.5 1v3M15 2.5h3M16.5 1v3M21 2.5h3M22.5 1v3" stroke="#ffffff" stroke-width="0.9"/><rect x="8.8" y="15.8" width="2.4" height="2.4" fill="#ffffff"/><rect x="14.5" y="14.5" width="9.5" height="9.5" rx="1.8" fill="#c9a300" stroke="#b08e00" stroke-width="0.5"/><path d="M15.45 19.25L23.05 19.25M16.78 16.78L21.72 21.72M19.25 15.45L19.25 23.05M21.72 16.78L16.78 21.72" stroke="#fffbe8" stroke-width="1.05" fill="none"/></svg>
<svg style="left:116.0px;top:134.0px;" width="24" height="24" viewBox="0 0 24 24"><path d="M1.5 23C3 17 6 9 12 5C15 3 19 2 23.5 0.5C23 4 22 8 19 11.5C15.5 15.5 9 17 5.5 18C4 19.5 3 21 2.5 23.5Z" fill="#5a82b4" stroke="#38587f" stroke-width="0.5"/><path d="M4 19C8 13 14 7 22 2" stroke="#c6d8ee" stroke-width="0.8" fill="none"/><path d="M8 15l6-1M11 11.5l6-1M14 8.5l5-0.8M7 14l1-5M10.5 11l1-4.5M14.5 8l1-3.5" stroke="#9ab6da" stroke-width="0.6"/><rect x="14.5" y="14.5" width="9.5" height="9.5" rx="1.8" fill="#c9a300" stroke="#b08e00" stroke-width="0.5"/><path d="M15.45 19.25L23.05 19.25M16.78 16.78L21.72 21.72M19.25 15.45L19.25 23.05M21.72 16.78L16.78 21.72" stroke="#fffbe8" stroke-width="1.05" fill="none"/></svg>
<svg style="left:149.0px;top:134.0px;" width="24" height="24" viewBox="0 0 24 24"><path d="M6 3.5v3.5M9 3.5v3.5M12 3.5v3.5M15 3.5v3.5M18 3.5v3.5M6 16v4M9 16v4M12 16v4" stroke="#356aa8" stroke-width="0.7"/><rect x="3.8" y="7" width="17.5" height="9.2" fill="#6b98cc" stroke="#c5d9f0" stroke-width="0.7"/><path d="M4.2 16H21.2V7.4" stroke="#4f7fb6" stroke-width="0.7" fill="none"/><rect x="14.8" y="14.8" width="9.2" height="9.2" rx="1.8" fill="#c9a300" stroke="#b08e00" stroke-width="0.5"/><path d="M15.72 19.40L23.08 19.40M17.01 17.01L21.79 21.79M19.40 15.72L19.40 23.08M21.79 17.01L17.01 21.79" stroke="#fffbe8" stroke-width="1.05" fill="none"/></svg>
<svg style="left:186px;top:138px;" width="5" height="17" viewBox="0 0 5 17"><rect x="0" y="0" width="2" height="2" fill="#6f7377"/><rect x="3" y="0" width="2" height="2" fill="#6f7377"/><rect x="0" y="3" width="2" height="2" fill="#6f7377"/><rect x="3" y="3" width="2" height="2" fill="#6f7377"/><rect x="0" y="6" width="2" height="2" fill="#6f7377"/><rect x="3" y="6" width="2" height="2" fill="#6f7377"/><rect x="0" y="9" width="2" height="2" fill="#6f7377"/><rect x="3" y="9" width="2" height="2" fill="#6f7377"/><rect x="0" y="12" width="2" height="2" fill="#6f7377"/><rect x="3" y="12" width="2" height="2" fill="#6f7377"/><rect x="0" y="15" width="2" height="2" fill="#6f7377"/><rect x="3" y="15" width="2" height="2" fill="#6f7377"/></svg>
<svg style="left:198.0px;top:134.0px;" width="24" height="24" viewBox="0 0 24 24"><g transform="translate(12.5 1) rotate(114.4)"><rect x="0" y="-2.6" width="2.70" height="5.2" fill="#f4f4f4" stroke="#9a9a9a" stroke-width="0.4"/><rect x="2.70" y="-2.6" width="14.86" height="5.2" fill="#c8784a"/><rect x="2.70" y="-0.91" width="14.86" height="1.82" fill="#dfa078"/><path d="M17.56 -2.6L22.51 0L17.56 2.6Z" fill="#dcdcdc" stroke="#b9a982" stroke-width="0.3"/><path d="M20.71 -0.94L22.51 0L20.71 0.94Z" fill="#5a5a5a"/></g><g transform="translate(17.8 1.8) rotate(116.6)"><rect x="0" y="-2.8" width="2.84" height="5.6" fill="#f4f4f4" stroke="#9a9a9a" stroke-width="0.4"/><rect x="2.84" y="-2.8" width="15.64" height="5.6" fill="#e2581c"/><rect x="2.84" y="-0.98" width="15.64" height="1.96" fill="#f6a01a"/><path d="M18.49 -2.8L23.70 0L18.49 2.8Z" fill="#dcdcdc" stroke="#b9a982" stroke-width="0.3"/><path d="M21.81 -1.01L23.70 0L21.81 1.01Z" fill="#5a5a5a"/></g></svg>
<svg style="left:218.5px;top:155.0px;" width="5" height="3" viewBox="0 0 5 3"><path d="M0 0H5L2.5 3Z" fill="#8d9093"/></svg>
<div style="left:228px;top:132px;width:30px;height:29px;background:#2e3237;box-sizing:border-box;border:1px solid #5a5e63;border-radius:3px;"></div>
<svg style="left:231.0px;top:134.0px;" width="24" height="24" viewBox="0 0 24 24"><g transform="translate(17.5 1.5) rotate(117.6)"><rect x="0" y="-2.7" width="2.84" height="5.4" fill="#f4f4f4" stroke="#9a9a9a" stroke-width="0.4"/><rect x="2.84" y="-2.7" width="15.65" height="5.4" fill="#d9c02a"/><rect x="2.84" y="-0.94" width="15.65" height="1.89" fill="#f8ea6a"/><path d="M18.49 -2.7L23.71 0L18.49 2.7Z" fill="#dcdcdc" stroke="#b9a982" stroke-width="0.3"/><path d="M21.81 -0.97L23.71 0L21.81 0.97Z" fill="#5a5a5a"/></g></svg>
<svg style="left:264.0px;top:134.0px;" width="24" height="24" viewBox="0 0 24 24"><g opacity="0.95"><rect x="2.5" y="1.5" width="19" height="20" rx="1.5" fill="#6f93b9" stroke="#5c80a8" stroke-width="1"/><rect x="5" y="2.5" width="14" height="9" fill="#f6f6f6" stroke="#d4d4d4" stroke-width="0.5"/><path d="M6.5 4.5h11M6.5 6.5h11M6.5 8.5h11" stroke="#8a8a8a" stroke-width="0.6"/><rect x="6" y="14.5" width="12" height="6" fill="#eaeaea"/><rect x="8" y="15.5" width="3" height="4" fill="#2f5f95"/></g><g transform="translate(22.5 9) rotate(118.9)"><rect x="0" y="-2.0" width="1.99" height="4" fill="#f4f4f4" stroke="#9a9a9a" stroke-width="0.4"/><rect x="1.99" y="-2.0" width="10.93" height="4" fill="#e0551a"/><rect x="1.99" y="-0.70" width="10.93" height="1.40" fill="#f6a13c"/><path d="M12.92 -2.0L16.56 0L12.92 2.0Z" fill="#dcdcdc" stroke="#b9a982" stroke-width="0.3"/><path d="M15.24 -0.72L16.56 0L15.24 0.72Z" fill="#5a5a5a"/></g></svg>
<svg style="left:297.0px;top:134.0px;" width="24" height="24" viewBox="0 0 24 24"><path d="M3 3L9 15L15 5H21" fill="none" stroke="#8fd29a" stroke-width="1.6"/><rect x="1.2" y="1.2" width="3.6" height="3.6" fill="#a8a8a8" stroke="#6e6e6e" stroke-width="0.4"/><rect x="13.2" y="3.2" width="3.6" height="3.6" fill="#a8a8a8" stroke="#6e6e6e" stroke-width="0.4"/><rect x="19.2" y="3.2" width="3.6" height="3.6" fill="#a8a8a8" stroke="#6e6e6e" stroke-width="0.4"/><rect x="7.2" y="13.2" width="3.6" height="3.6" fill="#a8a8a8" stroke="#6e6e6e" stroke-width="0.4"/><rect x="13" y="13" width="11" height="11" rx="1.8" fill="#c9a300" stroke="#b08e00" stroke-width="0.5"/><path d="M14.10 18.50L22.90 18.50M15.64 15.64L21.36 21.36M18.50 14.10L18.50 22.90M21.36 15.64L15.64 21.36" stroke="#fffbe8" stroke-width="1.05" fill="none"/><circle cx="18.5" cy="18.5" r="2.20" fill="#fffbe8"/><circle cx="18.5" cy="18.5" r="1.10" fill="#c9a300"/></svg>
<div style="left:327px;top:132px;width:30px;height:29px;background:#2e3237;box-sizing:border-box;border:1px solid #5a5e63;border-radius:3px;"></div>
<svg style="left:330.0px;top:134.0px;" width="24" height="24" viewBox="0 0 24 24"><path d="M5.5 5L2.5 20M8 7L5 20.5" stroke="#6d7074" stroke-width="0.7"/><path d="M9.5 5.5H16M9.5 7.5H18" stroke="#6d7074" stroke-width="0.7"/><rect x="4.2" y="2.8" width="3.4" height="3.4" transform="rotate(30 6 4.5)" fill="none" stroke="#e8e8e8" stroke-width="0.8"/><rect x="6.2" y="4.8" width="3.4" height="3.4" transform="rotate(30 8 6.5)" fill="none" stroke="#e8e8e8" stroke-width="0.8"/><path d="M21 9.5L12 19.5" stroke="#9a9c9e" stroke-width="1.4"/><path d="M12.5 20.5L10.5 21.5L11.2 19.2Z" fill="#d9b31a"/><path d="M11.2 19.2L14.5 15.5L16 17L12.5 20.5Z" fill="#f0cd2a"/><path d="M12 13.5L20.5 22" stroke="#c88a14" stroke-width="2.8"/><path d="M11 11L15 9.5L17 11.5L13.5 15Z" fill="#d8d8d8" stroke="#8a8a8a" stroke-width="0.5"/></svg>
<div style="left:359px;top:132px;width:10.5px;height:29px;background:#33373c;box-sizing:border-box;border:1px solid #5a5e63;border-radius:3px;"></div>
<svg style="left:360.5px;top:144.0px;" width="7" height="4" viewBox="0 0 7 4"><path d="M0 0H7L3.5 4Z" fill="#9a9c9e"/></svg>
<svg style="left:375.0px;top:134.0px;" width="24" height="24" viewBox="0 0 24 24"><rect x="2.2" y="2.8" width="19.8" height="5.2" fill="#f8e43d" stroke="#d4b81e" stroke-width="0.7"/><rect x="2.2" y="9.5" width="19.8" height="5.2" fill="#f8e43d" stroke="#d4b81e" stroke-width="0.7"/><rect x="2.2" y="16.2" width="19.8" height="5.2" fill="#f8e43d" stroke="#d4b81e" stroke-width="0.7"/><g transform="translate(21.5 1.2) rotate(118.9)"><rect x="0" y="-2.7" width="2.85" height="5.4" fill="#f4f4f4" stroke="#9a9a9a" stroke-width="0.4"/><rect x="2.85" y="-2.7" width="15.69" height="5.4" fill="#cc5a1c"/><rect x="2.85" y="-0.94" width="15.69" height="1.89" fill="#f0a070"/><path d="M18.54 -2.7L23.77 0L18.54 2.7Z" fill="#dcdcdc" stroke="#b9a982" stroke-width="0.3"/><path d="M21.87 -0.97L23.77 0L21.87 0.97Z" fill="#5a5a5a"/></g></svg>
<svg style="left:408.0px;top:134.0px;" width="24" height="24" viewBox="0 0 24 24"><path d="M9 4V2.5H15V4" fill="none" stroke="#cc0000" stroke-width="1.2"/><rect x="4" y="4" width="16" height="2.2" fill="#e00000"/><path d="M5.2 8H18.8L18 22.5H6Z" fill="none" stroke="#e00000" stroke-width="1.5"/><path d="M9.3 10V20.5M12 10V20.5M14.7 10V20.5" stroke="#e00000" stroke-width="1.4"/></svg>
<svg style="left:441.0px;top:134.0px;" width="24" height="24" viewBox="0 0 24 24"><path d="M1.5 12.5C6 12 10 12.5 15 15.5L13.5 16.5C9 14.5 5 14 1.5 13.5Z" fill="#e8e8e8" stroke="#8a8a8a" stroke-width="0.4"/><path d="M3.5 5.5C8 8 11 10.5 15.5 14.5L14 15C10 12 7 9.5 3 6.5Z" fill="#d6d6d6" stroke="#8a8a8a" stroke-width="0.4"/><ellipse cx="19.5" cy="9.5" rx="3.2" ry="2.2" transform="rotate(-40 19.5 9.5)" fill="none" stroke="#c01818" stroke-width="1.5"/><ellipse cx="19" cy="18.5" rx="3.2" ry="2.2" transform="rotate(40 19 18.5)" fill="none" stroke="#c01818" stroke-width="1.5"/><path d="M14.5 14.5L17.5 11.5M15 15.5L17 17" stroke="#c01818" stroke-width="1.5"/></svg>
<svg style="left:474.0px;top:134.0px;" width="24" height="24" viewBox="0 0 24 24"><path d="M8.6 2H16.6L19.6 5V17.5H8.6Z" fill="#9a9da0" stroke="#85888b" stroke-width="0.6"/><path d="M16.6 2V5H19.6" fill="#e0e0e0" stroke="#85888b" stroke-width="0.5"/><path d="M4.5 6.6H12.5L15.5 9.6V21.6H4.5Z" fill="#f7f7f7" stroke="#8a8a8a" stroke-width="0.6"/><path d="M12.5 6.6V9.6H15.5" fill="#e0e0e0" stroke="#8a8a8a" stroke-width="0.5"/><path d="M6.1 11.8H13.7" stroke="#6a6a6a" stroke-width="0.8"/><path d="M6.1 14.0H13.7" stroke="#6a6a6a" stroke-width="0.8"/><path d="M6.1 16.2H13.7" stroke="#6a6a6a" stroke-width="0.8"/><path d="M6.1 18.4H13.7" stroke="#6a6a6a" stroke-width="0.8"/></svg>
<svg style="left:507.0px;top:134.0px;" width="24" height="24" viewBox="0 0 24 24"><rect x="4.4" y="3" width="15.2" height="19" rx="0.5" fill="#fbe8cc" stroke="#c98a2c" stroke-width="1.1"/><rect x="8" y="1.6" width="8" height="3.6" fill="#d4d4d4" stroke="#a4a4a4" stroke-width="0.5"/><path d="M6.6 5.6H14.2L17.2 8.6V20.799999999999997H6.6Z" fill="#f7f7f7" stroke="#555555" stroke-width="0.6"/><path d="M14.2 5.6V8.6H17.2" fill="#e0e0e0" stroke="#555555" stroke-width="0.5"/><path d="M8.2 10.8H15.399999999999999" stroke="#6a6a6a" stroke-width="0.8"/><path d="M8.2 13.0H15.399999999999999" stroke="#6a6a6a" stroke-width="0.8"/><path d="M8.2 15.2H15.399999999999999" stroke="#6a6a6a" stroke-width="0.8"/><path d="M8.2 17.4H15.399999999999999" stroke="#6a6a6a" stroke-width="0.8"/></svg>
<svg style="left:540.0px;top:134.0px;" width="24" height="24" viewBox="0 0 24 24"><path d="M1.5 10L9.5 2.5V7C16 7 20 10.5 20 15C20 19 16.5 21.5 11.5 21.5V18C14 18 15.5 16.8 15.5 15C15.5 13.5 13.5 12.5 9.5 12.8V17.5Z" fill="#f08a3c" stroke="#d66a1c" stroke-width="0.7" stroke-linejoin="round"/></svg>
<svg style="left:573.0px;top:134.0px;" width="24" height="24" viewBox="0 0 24 24"><path d="M22.5 10L14.5 2.5V7C8 7 4 10.5 4 15C4 19 7.5 21.5 12.5 21.5V18C10 18 8.5 16.8 8.5 15C8.5 13.5 10.5 12.5 14.5 12.8V17.5Z" fill="#8e9194" stroke="#74777a" stroke-width="0.7" stroke-linejoin="round"/></svg>
<svg style="left:610px;top:138px;" width="5" height="17" viewBox="0 0 5 17"><rect x="0" y="0" width="2" height="2" fill="#6f7377"/><rect x="3" y="0" width="2" height="2" fill="#6f7377"/><rect x="0" y="3" width="2" height="2" fill="#6f7377"/><rect x="3" y="3" width="2" height="2" fill="#6f7377"/><rect x="0" y="6" width="2" height="2" fill="#6f7377"/><rect x="3" y="6" width="2" height="2" fill="#6f7377"/><rect x="0" y="9" width="2" height="2" fill="#6f7377"/><rect x="3" y="9" width="2" height="2" fill="#6f7377"/><rect x="0" y="12" width="2" height="2" fill="#6f7377"/><rect x="3" y="12" width="2" height="2" fill="#6f7377"/><rect x="0" y="15" width="2" height="2" fill="#6f7377"/><rect x="3" y="15" width="2" height="2" fill="#6f7377"/></svg>
<svg style="left:621.0px;top:134.0px;" width="24" height="24" viewBox="0 0 24 24"><path d="M1.2 9.45L5.7 4.2H22.2V14.7H5.7Z" fill="#f8e43d" stroke="#c9aa12" stroke-width="0.7" stroke-linejoin="round"/><text x="5.0" y="12.1" font-family="DejaVu Sans, Liberation Sans, sans-serif" font-weight="bold" font-size="8.4" fill="#3a3a1a">abc</text></svg>
<svg style="left:654.0px;top:134.0px;" width="24" height="24" viewBox="0 0 24 24"><path d="M9.2 9L3.14 5.50A7 7 0 0 1 15.26 5.50Z" fill="#fbd91a" stroke="#3a1a00" stroke-width="0.3"/><path d="M9.2 9L15.26 5.50A7 7 0 0 1 9.20 16.00Z" fill="#b81414" stroke="#3a1a00" stroke-width="0.3"/><path d="M9.2 9L9.20 16.00A7 7 0 0 1 3.14 5.50Z" fill="#18b04a" stroke="#3a1a00" stroke-width="0.3"/><rect x="9.4" y="15.5" width="4" height="7.8" fill="#f6c81e" stroke="#a88300" stroke-width="0.4"/><rect x="14.2" y="10" width="3.4" height="13.3" fill="#18b04a" stroke="#0b6a2a" stroke-width="0.4"/><rect x="18.4" y="17" width="3.4" height="6.3" fill="#d42020" stroke="#800" stroke-width="0.4"/></svg>
<svg style="left:688.0px;top:134.0px;" width="24" height="24" viewBox="0 0 24 24"><rect x="0.8" y="2.5" width="23.2" height="19.5" fill="#6e7a8a" stroke="#2f7be0" stroke-width="1.3"/><path d="M1 9.25L5.5 4H21V14.5H5.5Z" fill="#f8e43d" stroke="#c9aa12" stroke-width="0.7" stroke-linejoin="round"/><text x="4.8" y="11.9" font-family="DejaVu Sans, Liberation Sans, sans-serif" font-weight="bold" font-size="8.4" fill="#3a3a1a">abc</text><path d="M17.5 9V16" stroke="#f0f0f0" stroke-width="2"/><circle cx="19" cy="18.5" r="4.4" fill="#b8242c"/><circle cx="17.8" cy="17.2" r="1.3" fill="#e8787c"/></svg>
<svg style="left:721.0px;top:134.0px;" width="24" height="24" viewBox="0 0 24 24"><path d="M0.6 9.45L5.1 4.2H21.1V14.7H5.1Z" fill="#c6c8ca" stroke="#9a9c9e" stroke-width="0.7" stroke-linejoin="round"/><text x="4.3999999999999995" y="12.1" font-family="DejaVu Sans, Liberation Sans, sans-serif" font-weight="bold" font-size="8.4" fill="#5f6265">abc</text><path d="M17.5 9V15" stroke="#e8e8e8" stroke-width="1.6"/><circle cx="18.5" cy="18" r="4.4" fill="#717477"/></svg>
<svg style="left:754.0px;top:134.0px;" width="24" height="24" viewBox="0 0 24 24"><path d="M0.6 9.45L5.1 4.2H21.1V14.7H5.1Z" fill="#c6c8ca" stroke="#9a9c9e" stroke-width="0.7" stroke-linejoin="round"/><text x="4.3999999999999995" y="12.1" font-family="DejaVu Sans, Liberation Sans, sans-serif" font-weight="bold" font-size="8.4" fill="#5f6265">abc</text><path d="M8 19C11 15.5 17 15.5 20 19C17 22.5 11 22.5 8 19Z" fill="#3a3e42" stroke="#4d5155" stroke-width="0.6"/><circle cx="14" cy="19" r="2.6" fill="#a9abad"/><circle cx="14" cy="19" r="1.1" fill="#2b2f34"/></svg>
<svg style="left:787.0px;top:134.0px;" width="24" height="24" viewBox="0 0 24 24"><path d="M0.6 9.45L5.1 4.2H21.1V14.7H5.1Z" fill="#c6c8ca" stroke="#9a9c9e" stroke-width="0.7" stroke-linejoin="round"/><text x="4.3999999999999995" y="12.1" font-family="DejaVu Sans, Liberation Sans, sans-serif" font-weight="bold" font-size="8.4" fill="#5f6265">abc</text><rect x="13.5" y="13.5" width="10.5" height="10" rx="1.2" fill="#8a8d90" stroke="#72757a" stroke-width="0.5"/><path d="M14.8 17.2H19V15L23 18.5L19 22V19.8H14.8Z" fill="#f2f2f2"/></svg>
<svg style="left:820.0px;top:134.0px;" width="24" height="24" viewBox="0 0 24 24"><path d="M0.6 9.45L5.1 4.2H21.1V14.7H5.1Z" fill="#c6c8ca" stroke="#9a9c9e" stroke-width="0.7" stroke-linejoin="round"/><text x="4.3999999999999995" y="12.1" font-family="DejaVu Sans, Liberation Sans, sans-serif" font-weight="bold" font-size="8.4" fill="#5f6265">abc</text><rect x="13.5" y="13.5" width="10.5" height="10" rx="1.2" fill="#8a8d90" stroke="#72757a" stroke-width="0.5"/><path d="M15.8 19A3.2 3.2 0 1 1 19 22" fill="none" stroke="#eaeaea" stroke-width="1.5"/><path d="M17 20L19.5 23.5L20.5 19.5Z" fill="#eaeaea"/></svg>
<svg style="left:853.0px;top:134.0px;" width="24" height="24" viewBox="0 0 24 24"><path d="M0.6 9.45L5.1 4.2H21.1V14.7H5.1Z" fill="#c6c8ca" stroke="#9a9c9e" stroke-width="0.7" stroke-linejoin="round"/><text x="4.3999999999999995" y="12.1" font-family="DejaVu Sans, Liberation Sans, sans-serif" font-weight="bold" font-size="8.4" fill="#5f6265">abc</text><rect x="13.5" y="13.5" width="10.5" height="10" rx="1.2" fill="#8a8d90" stroke="#72757a" stroke-width="0.5"/><path d="M15.5 22L22 15.5" stroke="#eaeaea" stroke-width="2.2"/><path d="M14.8 22.7L15 20.8L16.8 22.5Z" fill="#eaeaea"/></svg>
<svg style="left:890px;top:138px;" width="5" height="17" viewBox="0 0 5 17"><rect x="0" y="0" width="2" height="2" fill="#6f7377"/><rect x="3" y="0" width="2" height="2" fill="#6f7377"/><rect x="0" y="3" width="2" height="2" fill="#6f7377"/><rect x="3" y="3" width="2" height="2" fill="#6f7377"/><rect x="0" y="6" width="2" height="2" fill="#6f7377"/><rect x="3" y="6" width="2" height="2" fill="#6f7377"/><rect x="0" y="9" width="2" height="2" fill="#6f7377"/><rect x="3" y="9" width="2" height="2" fill="#6f7377"/><rect x="0" y="12" width="2" height="2" fill="#6f7377"/><rect x="3" y="12" width="2" height="2" fill="#6f7377"/><rect x="0" y="15" width="2" height="2" fill="#6f7377"/><rect x="3" y="15" width="2" height="2" fill="#6f7377"/></svg>
<svg style="left:902.0px;top:134.0px;" width="24" height="24" viewBox="0 0 24 24"><circle cx="12" cy="9.8" r="10.2" fill="#8fb6e6" stroke="#5a8fd0" stroke-width="0.7"/><path d="M2 9.8H22M12 -0.4V20M4.5 3.5C9 6 15 6 19.5 3.5M4.5 16C9 13.5 15 13.5 19.5 16" stroke="#e6f0fb" stroke-width="0.8" fill="none"/><ellipse cx="12" cy="9.8" rx="5" ry="10.2" fill="none" stroke="#e6f0fb" stroke-width="0.8"/><path d="M4.5 6.5L8.5 5L10 8L7 10ZM13 5.5H18L19 9H14.5ZM9 10.5L12 11L11 13Z" fill="#3f6fb0"/><path d="M8.5 13L11 13L11.5 17.5H12.5L13 13L15.5 13L19.5 20L4.5 20Z" fill="#000"/><ellipse cx="7" cy="20.6" rx="3.8" ry="2.6" fill="#2b2f34" stroke="#000" stroke-width="1.7"/><ellipse cx="17" cy="20.6" rx="3.8" ry="2.6" fill="#2b2f34" stroke="#000" stroke-width="1.7"/></svg>
<svg style="left:939px;top:138px;" width="5" height="17" viewBox="0 0 5 17"><rect x="0" y="0" width="2" height="2" fill="#6f7377"/><rect x="3" y="0" width="2" height="2" fill="#6f7377"/><rect x="0" y="3" width="2" height="2" fill="#6f7377"/><rect x="3" y="3" width="2" height="2" fill="#6f7377"/><rect x="0" y="6" width="2" height="2" fill="#6f7377"/><rect x="3" y="6" width="2" height="2" fill="#6f7377"/><rect x="0" y="9" width="2" height="2" fill="#6f7377"/><rect x="3" y="9" width="2" height="2" fill="#6f7377"/><rect x="0" y="12" width="2" height="2" fill="#6f7377"/><rect x="3" y="12" width="2" height="2" fill="#6f7377"/><rect x="0" y="15" width="2" height="2" fill="#6f7377"/><rect x="3" y="15" width="2" height="2" fill="#6f7377"/></svg>
<svg style="left:951.0px;top:134.0px;" width="24" height="24" viewBox="0 0 24 24"><path d="M11.8 1.5C8.5 1.5 7 2.8 7 4.8V7.5H12.2V8.5H4.8C2.6 8.5 1.2 10 1.2 12.6C1.2 15.4 2.6 17 4.6 17H6.8V14.2C6.8 12.4 8.2 11 10 11H14.6C16 11 17 10 17 8.6V4.8C17 2.8 15.2 1.5 11.8 1.5Z" fill="#3a78b0"/><circle cx="9.3" cy="4.3" r="0.9" fill="#e6eef6"/><path d="M12.2 23C15.5 23 17 21.7 17 19.7V17H11.8V16H19.2C21.4 16 22.8 14.5 22.8 11.9C22.8 9.1 21.4 7.5 19.4 7.5H17.2V10.3C17.2 12.1 15.8 13.5 14 13.5H9.4C8 13.5 7 14.5 7 15.9V19.7C7 21.7 8.8 23 12.2 23Z" fill="#fbd040"/><circle cx="14.7" cy="20.2" r="0.9" fill="#7a6514"/><path d="M17.5 19L23.5 21L17.5 23.2" fill="none" stroke="#8a8d90" stroke-width="0.9"/></svg>
<svg style="left:988px;top:138px;" width="5" height="17" viewBox="0 0 5 17"><rect x="0" y="0" width="2" height="2" fill="#6f7377"/><rect x="3" y="0" width="2" height="2" fill="#6f7377"/><rect x="0" y="3" width="2" height="2" fill="#6f7377"/><rect x="3" y="3" width="2" height="2" fill="#6f7377"/><rect x="0" y="6" width="2" height="2" fill="#6f7377"/><rect x="3" y="6" width="2" height="2" fill="#6f7377"/><rect x="0" y="9" width="2" height="2" fill="#6f7377"/><rect x="3" y="9" width="2" height="2" fill="#6f7377"/><rect x="0" y="12" width="2" height="2" fill="#6f7377"/><rect x="3" y="12" width="2" height="2" fill="#6f7377"/><rect x="0" y="15" width="2" height="2" fill="#6f7377"/><rect x="3" y="15" width="2" height="2" fill="#6f7377"/></svg>
<svg style="left:1000.0px;top:134.0px;" width="24" height="24" viewBox="0 0 24 24"><rect x="2.5" y="2" width="17.5" height="20.5" fill="#6699cc" stroke="#1d2c3a" stroke-width="0.6"/><rect x="2.5" y="2" width="4.2" height="20.5" fill="#2a3b4d"/><text x="13.6" y="17.5" text-anchor="middle" font-family="Liberation Serif, serif" font-size="15" fill="#ffffff">?</text></svg>
<svg style="left:1037px;top:138px;" width="5" height="17" viewBox="0 0 5 17"><rect x="0" y="0" width="2" height="2" fill="#6f7377"/><rect x="3" y="0" width="2" height="2" fill="#6f7377"/><rect x="0" y="3" width="2" height="2" fill="#6f7377"/><rect x="3" y="3" width="2" height="2" fill="#6f7377"/><rect x="0" y="6" width="2" height="2" fill="#6f7377"/><rect x="3" y="6" width="2" height="2" fill="#6f7377"/><rect x="0" y="9" width="2" height="2" fill="#6f7377"/><rect x="3" y="9" width="2" height="2" fill="#6f7377"/><rect x="0" y="12" width="2" height="2" fill="#6f7377"/><rect x="3" y="12" width="2" height="2" fill="#6f7377"/><rect x="0" y="15" width="2" height="2" fill="#6f7377"/><rect x="3" y="15" width="2" height="2" fill="#6f7377"/></svg>
<div style="left:377px;top:167px;width:1069px;height:880px;background:#ffffff;"></div>
<svg style="left:377px;top:167px;" width="1069" height="880" viewBox="0 0 1069 880"><polyline points="1065,-1 816.5,84.3 774.5,146.3 604.5,302.5 477.5,500.3 340.5,705.3 210.5,880.5" fill="none" stroke="#ff6412" stroke-width="1.1"/><polyline points="1069.5,361 1035.5,343.3 949.5,362.3 1026.5,461.3 973.5,498.3 1048.5,510.3 1069.5,489" fill="none" stroke="#ff6412" stroke-width="1.2"/><circle cx="816.5" cy="84.3" r="4.6" fill="#fb1d25" fill-opacity="0.93"/><circle cx="774.5" cy="146.3" r="4.6" fill="#fb1d25" fill-opacity="0.93"/><circle cx="604.5" cy="302.5" r="7.6" fill="#fb1d25" fill-opacity="0.93"/><circle cx="477.5" cy="500.3" r="4.6" fill="#fb1d25" fill-opacity="0.93"/><circle cx="340.5" cy="705.3" r="4.6" fill="#fb1d25" fill-opacity="0.93"/><circle cx="1035.5" cy="343.3" r="4.6" fill="#fb1d25" fill-opacity="0.93"/><circle cx="949.5" cy="362.3" r="4.6" fill="#fb1d25" fill-opacity="0.93"/><circle cx="1026.5" cy="461.3" r="4.6" fill="#fb1d25" fill-opacity="0.93"/><circle cx="973.5" cy="498.3" r="4.6" fill="#fb1d25" fill-opacity="0.93"/><circle cx="1048.5" cy="510.3" r="4.6" fill="#fb1d25" fill-opacity="0.93"/><path d="M858.5 309.5l7.4 7.4m0 -7.4l-7.4 7.4" stroke="#fb1d25" stroke-width="1.25" fill="none"/><path d="M848.5 321.5l7.4 7.4m0 -7.4l-7.4 7.4" stroke="#fb1d25" stroke-width="1.25" fill="none"/><path d="M901.5 309.5l7.4 7.4m0 -7.4l-7.4 7.4" stroke="#fb1d25" stroke-width="1.25" fill="none"/><path d="M880.5 346.5l7.4 7.4m0 -7.4l-7.4 7.4" stroke="#fb1d25" stroke-width="1.25" fill="none"/><path d="M891.5 370.5l7.4 7.4m0 -7.4l-7.4 7.4" stroke="#fb1d25" stroke-width="1.25" fill="none"/><path d="M924.5 376.5l7.4 7.4m0 -7.4l-7.4 7.4" stroke="#fb1d25" stroke-width="1.25" fill="none"/><path d="M946.5 395.5l7.4 7.4m0 -7.4l-7.4 7.4" stroke="#fb1d25" stroke-width="1.25" fill="none"/><path d="M892.5 401.5l7.4 7.4m0 -7.4l-7.4 7.4" stroke="#fb1d25" stroke-width="1.25" fill="none"/><path d="M1054.5 413.5l7.4 7.4m0 -7.4l-7.4 7.4" stroke="#fb1d25" stroke-width="1.25" fill="none"/><path d="M957.5 450.5l7.4 7.4m0 -7.4l-7.4 7.4" stroke="#fb1d25" stroke-width="1.25" fill="none"/><path d="M990.5 450.5l7.4 7.4m0 -7.4l-7.4 7.4" stroke="#fb1d25" stroke-width="1.25" fill="none"/><path d="M990.5 487.5l7.4 7.4m0 -7.4l-7.4 7.4" stroke="#fb1d25" stroke-width="1.25" fill="none"/><path d="M980.5 494.5l7.4 7.4m0 -7.4l-7.4 7.4" stroke="#fb1d25" stroke-width="1.25" fill="none"/><path d="M1033.5 500.5l7.4 7.4m0 -7.4l-7.4 7.4" stroke="#fb1d25" stroke-width="1.25" fill="none"/><path d="M1001.5 512.5l7.4 7.4m0 -7.4l-7.4 7.4" stroke="#fb1d25" stroke-width="1.25" fill="none"/><path d="M593.0 302.5h19M602.5 293.0v19" stroke="#4a4f55" stroke-opacity="0.9" stroke-width="3" stroke-linecap="round" fill="none"/><path d="M593.5 302.5h18M602.5 293.5v18" stroke="#ffffff" stroke-width="1.1" stroke-linecap="round" fill="none"/><rect x="602.0" y="302.0" width="1" height="1" fill="#ff2020"/></svg>
<span class="t" style="left:4px;top:167px;line-height:20px;font-size:13.2px;color:#eff0f1;letter-spacing:0.23px;">Browser</span>
<svg style="left:343px;top:170px;" width="11" height="11" viewBox="0 0 11 11"><path d="M1.8 0.5H9.2L10.5 1.8V9.2L9.2 10.5H1.8L0.5 9.2V1.8Z" fill="none" stroke="#8f8e89" stroke-width="1"/><path d="M0.5 0.5L2 2M10.5 0.5L9 2M0.5 10.5L2 9M10.5 10.5L9 9" stroke="#8f8e89" stroke-width="0.6"/><path d="M4.5 4.5V2.5H8.5V6.5H6.5" fill="none" stroke="#8f8e89" stroke-width="0.9"/><rect x="2.5" y="4.5" width="4" height="4" fill="none" stroke="#8f8e89" stroke-width="0.9"/></svg>
<svg style="left:357px;top:170px;" width="11" height="11" viewBox="0 0 11 11"><path d="M1.8 0.5H9.2L10.5 1.8V9.2L9.2 10.5H1.8L0.5 9.2V1.8Z" fill="none" stroke="#8f8e89" stroke-width="1"/><path d="M0.5 0.5L2 2M10.5 0.5L9 2M0.5 10.5L2 9M10.5 10.5L9 9" stroke="#8f8e89" stroke-width="0.6"/><path d="M2.8 2.8L8.2 8.2M8.2 2.8L2.8 8.2" stroke="#8f8e89" stroke-width="1.7"/></svg>
<svg style="left:7.5px;top:193.0px;" width="16" height="16" viewBox="0 0 16 16"><rect x="1.5" y="1.5" width="11.5" height="11.5" fill="#ededeb" stroke="#cfcfcd" stroke-width="0.6"/><rect x="9.5" y="10" width="6" height="6" rx="0.8" fill="#5da462"/><circle cx="12.5" cy="13" r="1.7" fill="#cfe8cf"/></svg>
<svg style="left:32.7px;top:193.0px;" width="16" height="16" viewBox="0 0 16 16"><path d="M1.8 7.5C1.8 3.5 5.5 1.4 8.8 2.2C10.4 2.6 11.4 3.2 12.2 4.2L14.2 2V7.5H8.8L10.8 5.6C9.6 4.4 7.8 4.2 6.4 5C5.2 5.6 4.6 6.4 4.4 7.5Z" fill="url(#gblue)" stroke="#2f66a6" stroke-width="0.4"/><path d="M14.2 8.5C14.2 12.5 10.5 14.6 7.2 13.8C5.6 13.4 4.6 12.8 3.8 11.8L1.8 14V8.5H7.2L5.2 10.4C6.4 11.6 8.2 11.8 9.6 11C10.8 10.4 11.4 9.6 11.6 8.5Z" fill="url(#gblue)" stroke="#2f66a6" stroke-width="0.4"/></svg>
<svg style="left:57.900000000000006px;top:193.0px;" width="16" height="16" viewBox="0 0 16 16"><rect x="1.5" y="1" width="13" height="1.8" fill="#f8e43d"/><path d="M1.5 3.2H14.5L9.6 8.6V14L6.6 12V8.6Z" fill="#6a9fd8" stroke="#4d84c0" stroke-width="0.5" stroke-linejoin="round"/></svg>
<svg style="left:83.1px;top:193.0px;" width="16" height="16" viewBox="0 0 16 16"><path d="M1.5 2.2H9.5M2.5 2.2V13.4H4.5M2.5 7.7H4.5" stroke="#d0d0d0" stroke-width="0.9" fill="none"/><rect x="4.5" y="6" width="3.4" height="3.4" fill="#f6a01a"/><rect x="4.5" y="11.6" width="3.4" height="3.4" fill="#f6a01a"/><rect x="5.4" y="6.9" width="1.2" height="1.2" fill="#fde9a8"/><rect x="5.4" y="12.5" width="1.2" height="1.2" fill="#fde9a8"/><path d="M11.5 0.5L15.5 5.5H12.9V15H10.1V5.5H7.5Z" fill="#6496d0" stroke="#4f80b8" stroke-width="0.4"/></svg>
<svg style="left:108.3px;top:193.0px;" width="16" height="16" viewBox="0 0 16 16"><circle cx="8" cy="8" r="6.3" fill="#6a9fd8" stroke="#4d84c0" stroke-width="0.7"/><text x="8" y="12" text-anchor="middle" font-family="Liberation Serif, serif" font-style="italic" font-weight="bold" font-size="11.5" fill="#ffffff">i</text></svg>
<div style="left:1px;top:217px;width:354px;height:417px;background:#232629;"></div>
<div style="left:1px;top:498px;width:354px;height:20px;background:#1f4a63;"></div>
<svg style="left:67.0px;top:225.7px;" width="8" height="4" viewBox="0 0 8 4"><path d="M0 0H8L4.0 4Z" fill="#9a9c9e"/></svg>
<svg style="left:84.0px;top:220.0px;" width="16" height="16" viewBox="0 0 16 16"><path d="M1 1H8.6L10.2 3H15V8H1Z" fill="#9b9d95"/><path d="M1 5H7.2L8.8 6.6H15V15H1Z" fill="#f2f2f0"/><path d="M1 4.6H7.4L9 6.2H15" fill="none" stroke="#2a2d30" stroke-width="0.8"/></svg>
<span class="t" style="left:106px;top:219px;line-height:20px;font-size:13.2px;color:#eff0f1;letter-spacing:0.3px;">sylt</span>
<svg style="left:87.0px;top:245.7px;" width="8" height="4" viewBox="0 0 8 4"><path d="M0 0H8L4.0 4Z" fill="#9a9c9e"/></svg>
<svg style="left:104.0px;top:240.0px;" width="16" height="16" viewBox="0 0 16 16"><path d="M1 1H8.6L10.2 3H15V8H1Z" fill="#9b9d95"/><path d="M1 5H7.2L8.8 6.6H15V15H1Z" fill="#f2f2f0"/><path d="M1 4.6H7.4L9 6.2H15" fill="none" stroke="#2a2d30" stroke-width="0.8"/></svg>
<span class="t" style="left:126px;top:239px;line-height:20px;font-size:13.2px;color:#eff0f1;letter-spacing:0.33px;">data</span>
<svg style="left:107.0px;top:265.7px;" width="8" height="4" viewBox="0 0 8 4"><path d="M0 0H8L4.0 4Z" fill="#9a9c9e"/></svg>
<svg style="left:124.0px;top:260.0px;" width="16" height="16" viewBox="0 0 16 16"><path d="M1 1H8.6L10.2 3H15V8H1Z" fill="#9b9d95"/><path d="M1 5H7.2L8.8 6.6H15V15H1Z" fill="#f2f2f0"/><path d="M1 4.6H7.4L9 6.2H15" fill="none" stroke="#2a2d30" stroke-width="0.8"/></svg>
<span class="t" style="left:146px;top:259px;line-height:20px;font-size:13.2px;color:#eff0f1;letter-spacing:-0.44px;">ASTGTM2_N54E008</span>
<svg style="left:144.0px;top:280.0px;" width="16" height="16" viewBox="0 0 16 16"><rect x="2.10" y="2.40" width="4.33" height="4.17" fill="#2c4059"/><rect x="6.43" y="2.40" width="4.33" height="4.17" fill="#a6c5e6"/><rect x="10.76" y="2.40" width="4.33" height="4.17" fill="#2c4059"/><rect x="2.10" y="6.57" width="4.33" height="4.17" fill="#a6c5e6"/><rect x="6.43" y="6.57" width="4.33" height="4.17" fill="#2c4059"/><rect x="10.76" y="6.57" width="4.33" height="4.17" fill="#a6c5e6"/><rect x="2.10" y="10.74" width="4.33" height="4.17" fill="#2c4059"/><rect x="6.43" y="10.74" width="4.33" height="4.17" fill="#a6c5e6"/></svg>
<span class="t" style="left:166px;top:279px;line-height:20px;font-size:13.2px;color:#eff0f1;letter-spacing:-0.2px;">ASTGTM2_N54E008_dem.tif</span>
<svg style="left:144.0px;top:300.0px;" width="16" height="16" viewBox="0 0 16 16"><rect x="2.10" y="2.40" width="4.33" height="4.17" fill="#2c4059"/><rect x="6.43" y="2.40" width="4.33" height="4.17" fill="#a6c5e6"/><rect x="10.76" y="2.40" width="4.33" height="4.17" fill="#2c4059"/><rect x="2.10" y="6.57" width="4.33" height="4.17" fill="#a6c5e6"/><rect x="6.43" y="6.57" width="4.33" height="4.17" fill="#2c4059"/><rect x="10.76" y="6.57" width="4.33" height="4.17" fill="#a6c5e6"/><rect x="2.10" y="10.74" width="4.33" height="4.17" fill="#2c4059"/><rect x="6.43" y="10.74" width="4.33" height="4.17" fill="#a6c5e6"/></svg>
<span class="t" style="left:166px;top:299px;line-height:20px;font-size:13.2px;color:#eff0f1;letter-spacing:-0.15px;">ASTGTM2_N54E008_num.tif</span>
<svg style="left:144.0px;top:320.0px;" width="16" height="16" viewBox="0 0 16 16"><rect x="2.10" y="2.40" width="4.33" height="4.17" fill="#2c4059"/><rect x="6.43" y="2.40" width="4.33" height="4.17" fill="#a6c5e6"/><rect x="10.76" y="2.40" width="4.33" height="4.17" fill="#2c4059"/><rect x="2.10" y="6.57" width="4.33" height="4.17" fill="#a6c5e6"/><rect x="6.43" y="6.57" width="4.33" height="4.17" fill="#2c4059"/><rect x="10.76" y="6.57" width="4.33" height="4.17" fill="#a6c5e6"/><rect x="2.10" y="10.74" width="4.33" height="4.17" fill="#2c4059"/><rect x="6.43" y="10.74" width="4.33" height="4.17" fill="#a6c5e6"/></svg>
<span class="t" style="left:166px;top:319px;line-height:20px;font-size:13.2px;color:#eff0f1;letter-spacing:-0.24px;">README.pdf</span>
<svg style="left:144.0px;top:340.0px;" width="16" height="16" viewBox="0 0 16 16"><path d="M1.2 3.8C3 2.2 6 3.6 8 3.8C10.5 4 13 2.6 15 3.6C15.2 6 15.2 9 14.8 11C12.5 10.6 10 9.4 7.5 9.8C5 10.4 3.4 12.6 1.8 13.6C0.6 10.6 0.6 6.6 1.2 3.8Z" fill="url(#gv)"/></svg>
<span class="t" style="left:166px;top:339px;line-height:20px;font-size:13.2px;color:#eff0f1;letter-spacing:-0.24px;">README.pdf</span>
<svg style="left:107.0px;top:365.7px;" width="8" height="4" viewBox="0 0 8 4"><path d="M0 0H8L4.0 4Z" fill="#9a9c9e"/></svg>
<svg style="left:124.0px;top:360.0px;" width="16" height="16" viewBox="0 0 16 16"><path d="M1 1H8.6L10.2 3H15V8H1Z" fill="#9b9d95"/><path d="M1 5H7.2L8.8 6.6H15V15H1Z" fill="#f2f2f0"/><path d="M1 4.6H7.4L9 6.2H15" fill="none" stroke="#2a2d30" stroke-width="0.8"/></svg>
<span class="t" style="left:146px;top:359px;line-height:20px;font-size:13.2px;color:#eff0f1;letter-spacing:-0.44px;">ASTGTM2_N55E008</span>
<svg style="left:144.0px;top:380.0px;" width="16" height="16" viewBox="0 0 16 16"><rect x="2.10" y="2.40" width="4.33" height="4.17" fill="#2c4059"/><rect x="6.43" y="2.40" width="4.33" height="4.17" fill="#a6c5e6"/><rect x="10.76" y="2.40" width="4.33" height="4.17" fill="#2c4059"/><rect x="2.10" y="6.57" width="4.33" height="4.17" fill="#a6c5e6"/><rect x="6.43" y="6.57" width="4.33" height="4.17" fill="#2c4059"/><rect x="10.76" y="6.57" width="4.33" height="4.17" fill="#a6c5e6"/><rect x="2.10" y="10.74" width="4.33" height="4.17" fill="#2c4059"/><rect x="6.43" y="10.74" width="4.33" height="4.17" fill="#a6c5e6"/></svg>
<span class="t" style="left:166px;top:379px;line-height:20px;font-size:13.2px;color:#eff0f1;letter-spacing:-0.2px;">ASTGTM2_N55E008_dem.tif</span>
<svg style="left:144.0px;top:400.0px;" width="16" height="16" viewBox="0 0 16 16"><rect x="2.10" y="2.40" width="4.33" height="4.17" fill="#2c4059"/><rect x="6.43" y="2.40" width="4.33" height="4.17" fill="#a6c5e6"/><rect x="10.76" y="2.40" width="4.33" height="4.17" fill="#2c4059"/><rect x="2.10" y="6.57" width="4.33" height="4.17" fill="#a6c5e6"/><rect x="6.43" y="6.57" width="4.33" height="4.17" fill="#2c4059"/><rect x="10.76" y="6.57" width="4.33" height="4.17" fill="#a6c5e6"/><rect x="2.10" y="10.74" width="4.33" height="4.17" fill="#2c4059"/><rect x="6.43" y="10.74" width="4.33" height="4.17" fill="#a6c5e6"/></svg>
<span class="t" style="left:166px;top:399px;line-height:20px;font-size:13.2px;color:#eff0f1;letter-spacing:-0.15px;">ASTGTM2_N55E008_num.tif</span>
<svg style="left:144.0px;top:420.0px;" width="16" height="16" viewBox="0 0 16 16"><rect x="2.10" y="2.40" width="4.33" height="4.17" fill="#2c4059"/><rect x="6.43" y="2.40" width="4.33" height="4.17" fill="#a6c5e6"/><rect x="10.76" y="2.40" width="4.33" height="4.17" fill="#2c4059"/><rect x="2.10" y="6.57" width="4.33" height="4.17" fill="#a6c5e6"/><rect x="6.43" y="6.57" width="4.33" height="4.17" fill="#2c4059"/><rect x="10.76" y="6.57" width="4.33" height="4.17" fill="#a6c5e6"/><rect x="2.10" y="10.74" width="4.33" height="4.17" fill="#2c4059"/><rect x="6.43" y="10.74" width="4.33" height="4.17" fill="#a6c5e6"/></svg>
<span class="t" style="left:166px;top:419px;line-height:20px;font-size:13.2px;color:#eff0f1;letter-spacing:-0.24px;">README.pdf</span>
<svg style="left:144.0px;top:440.0px;" width="16" height="16" viewBox="0 0 16 16"><path d="M1.2 3.8C3 2.2 6 3.6 8 3.8C10.5 4 13 2.6 15 3.6C15.2 6 15.2 9 14.8 11C12.5 10.6 10 9.4 7.5 9.8C5 10.4 3.4 12.6 1.8 13.6C0.6 10.6 0.6 6.6 1.2 3.8Z" fill="url(#gv)"/></svg>
<span class="t" style="left:166px;top:439px;line-height:20px;font-size:13.2px;color:#eff0f1;letter-spacing:-0.24px;">README.pdf</span>
<svg style="left:107.0px;top:465.7px;" width="8" height="4" viewBox="0 0 8 4"><path d="M0 0H8L4.0 4Z" fill="#9a9c9e"/></svg>
<svg style="left:124.0px;top:460.0px;" width="16" height="16" viewBox="0 0 16 16"><path d="M1 1H8.6L10.2 3H15V8H1Z" fill="#9b9d95"/><path d="M1 5H7.2L8.8 6.6H15V15H1Z" fill="#f2f2f0"/><path d="M1 4.6H7.4L9 6.2H15" fill="none" stroke="#2a2d30" stroke-width="0.8"/></svg>
<span class="t" style="left:146px;top:459px;line-height:20px;font-size:13.2px;color:#eff0f1;letter-spacing:0.14px;">Bathymetrie_shape</span>
<svg style="left:127.0px;top:485.7px;" width="8" height="4" viewBox="0 0 8 4"><path d="M0 0H8L4.0 4Z" fill="#9a9c9e"/></svg>
<svg style="left:144.0px;top:480.0px;" width="16" height="16" viewBox="0 0 16 16"><path d="M1 1H8.6L10.2 3H15V8H1Z" fill="#9b9d95"/><path d="M1 5H7.2L8.8 6.6H15V15H1Z" fill="#f2f2f0"/><path d="M1 4.6H7.4L9 6.2H15" fill="none" stroke="#2a2d30" stroke-width="0.8"/></svg>
<span class="t" style="left:166px;top:479px;line-height:20px;font-size:13.2px;color:#eff0f1;letter-spacing:0.21px;">Bathymetrie_1m_isolinien</span>
<svg style="left:164.0px;top:500.0px;" width="16" height="16" viewBox="0 0 16 16"><path d="M1.2 3.8C3 2.2 6 3.6 8 3.8C10.5 4 13 2.6 15 3.6C15.2 6 15.2 9 14.8 11C12.5 10.6 10 9.4 7.5 9.8C5 10.4 3.4 12.6 1.8 13.6C0.6 10.6 0.6 6.6 1.2 3.8Z" fill="url(#gv2)"/></svg>
<span class="t" style="left:186px;top:499px;line-height:20px;font-size:13.2px;color:#eff0f1;letter-spacing:0.17px;width:169px;overflow:hidden;">Bathymetrie_1_m_Isolinien.shp</span>
<svg style="left:129.0px;top:524.0px;" width="4" height="8" viewBox="0 0 4 8"><path d="M0 0V8L4 4.0Z" fill="#a6a8aa"/></svg>
<svg style="left:144.0px;top:520.0px;" width="16" height="16" viewBox="0 0 16 16"><rect x="1" y="1" width="14" height="14" fill="#f1f1ef"/><rect x="5.6" y="1" width="2.6" height="14" fill="#7a7c78"/><path d="M6.9 1.5V9" stroke="#e8e8e6" stroke-width="1.2" stroke-dasharray="0.9 0.9"/><rect x="6" y="9.6" width="1.8" height="1.6" fill="#f1f1ef"/><rect x="6" y="12.2" width="1.8" height="1.8" fill="#f1f1ef"/></svg>
<span class="t" style="left:166px;top:519px;line-height:20px;font-size:13.2px;color:#eff0f1;letter-spacing:0.2px;">Bathymetrie_1m_isolinien.zip</span>
<svg style="left:129.0px;top:544.0px;" width="4" height="8" viewBox="0 0 4 8"><path d="M0 0V8L4 4.0Z" fill="#a6a8aa"/></svg>
<svg style="left:144.0px;top:540.0px;" width="16" height="16" viewBox="0 0 16 16"><rect x="1" y="1" width="14" height="14" fill="#f1f1ef"/><rect x="5.6" y="1" width="2.6" height="14" fill="#7a7c78"/><path d="M6.9 1.5V9" stroke="#e8e8e6" stroke-width="1.2" stroke-dasharray="0.9 0.9"/><rect x="6" y="9.6" width="1.8" height="1.6" fill="#f1f1ef"/><rect x="6" y="12.2" width="1.8" height="1.8" fill="#f1f1ef"/></svg>
<span class="t" style="left:166px;top:539px;line-height:20px;font-size:13.2px;color:#eff0f1;letter-spacing:0.17px;">Bathymetrie_5m_Isolinien.zip</span>
<svg style="left:109.0px;top:564.0px;" width="4" height="8" viewBox="0 0 4 8"><path d="M0 0V8L4 4.0Z" fill="#a6a8aa"/></svg>
<svg style="left:124.0px;top:560.0px;" width="16" height="16" viewBox="0 0 16 16"><path d="M1 1.5H6.5L8 3.5H15V15H1Z" fill="#f3f3f1"/></svg>
<span class="t" style="left:146px;top:559px;line-height:20px;font-size:13.2px;color:#eff0f1;letter-spacing:-0.17px;">N054E008</span>
<svg style="left:109.0px;top:584.0px;" width="4" height="8" viewBox="0 0 4 8"><path d="M0 0V8L4 4.0Z" fill="#a6a8aa"/></svg>
<svg style="left:124.0px;top:580.0px;" width="16" height="16" viewBox="0 0 16 16"><path d="M1 1.5H6.5L8 3.5H15V15H1Z" fill="#f3f3f1"/></svg>
<span class="t" style="left:146px;top:579px;line-height:20px;font-size:13.2px;color:#eff0f1;letter-spacing:-0.17px;">N055E008</span>
<svg style="left:109.0px;top:604.0px;" width="4" height="8" viewBox="0 0 4 8"><path d="M0 0V8L4 4.0Z" fill="#a6a8aa"/></svg>
<svg style="left:124.0px;top:600.0px;" width="16" height="16" viewBox="0 0 16 16"><rect x="1" y="1" width="14" height="14" fill="#f1f1ef"/><rect x="5.6" y="1" width="2.6" height="14" fill="#7a7c78"/><path d="M6.9 1.5V9" stroke="#e8e8e6" stroke-width="1.2" stroke-dasharray="0.9 0.9"/><rect x="6" y="9.6" width="1.8" height="1.6" fill="#f1f1ef"/><rect x="6" y="12.2" width="1.8" height="1.8" fill="#f1f1ef"/></svg>
<span class="t" style="left:146px;top:599px;line-height:20px;font-size:13.2px;color:#eff0f1;letter-spacing:-0.38px;">ASTGTM2_N54E008.zip</span>
<svg style="left:109.0px;top:624.0px;" width="4" height="8" viewBox="0 0 4 8"><path d="M0 0V8L4 4.0Z" fill="#a6a8aa"/></svg>
<svg style="left:124.0px;top:620.0px;" width="16" height="16" viewBox="0 0 16 16"><rect x="1" y="1" width="14" height="14" fill="#f1f1ef"/><rect x="5.6" y="1" width="2.6" height="14" fill="#7a7c78"/><path d="M6.9 1.5V9" stroke="#e8e8e6" stroke-width="1.2" stroke-dasharray="0.9 0.9"/><rect x="6" y="9.6" width="1.8" height="1.6" fill="#f1f1ef"/><rect x="6" y="12.2" width="1.8" height="1.8" fill="#f1f1ef"/></svg>
<span class="t" style="left:146px;top:619px;line-height:20px;font-size:13.2px;color:#eff0f1;letter-spacing:-0.38px;height:15px;overflow:hidden;">ASTGTM2_N55E008.zip</span>
<div style="left:1px;top:634px;width:370px;height:14px;background:#31363b;"></div>
<div style="left:356px;top:217px;width:13px;height:417px;background:#3a3d41;"></div>
<div style="left:356px;top:218px;width:13px;height:13px;background:#35393d;box-sizing:border-box;border:1px solid #585c60;"></div>
<svg style="left:358.5px;top:222.3px;" width="8" height="4.4" viewBox="0 0 9 5"><path d="M0 5H9L4.5 0Z" fill="#bfc1c3"/></svg>
<div style="left:356px;top:620px;width:13px;height:13px;background:#35393d;box-sizing:border-box;border:1px solid #585c60;"></div>
<svg style="left:358.5px;top:624.3px;" width="8" height="4.4" viewBox="0 0 9 5"><path d="M0 0H9L4.5 5Z" fill="#bfc1c3"/></svg>
<div style="left:356px;top:310px;width:13px;height:65px;background:#42464a;box-sizing:border-box;border:1px solid #565a5e;"></div>
<div style="left:1px;top:634px;width:354px;height:13px;background:#3a3d41;"></div>
<div style="left:2px;top:634px;width:13px;height:13px;background:#35393d;box-sizing:border-box;border:1px solid #585c60;"></div>
<svg style="left:6.3px;top:636.5px;" width="4.4" height="8" viewBox="0 0 5 9"><path d="M5 0V9L0 4.5Z" fill="#bfc1c3"/></svg>
<div style="left:342px;top:634px;width:13px;height:13px;background:#35393d;box-sizing:border-box;border:1px solid #585c60;"></div>
<svg style="left:346.3px;top:636.5px;" width="4.4" height="8" viewBox="0 0 5 9"><path d="M0 0V9L5 4.5Z" fill="#bfc1c3"/></svg>
<div style="left:15px;top:634px;width:249px;height:13px;background:#42464a;box-sizing:border-box;border:1px solid #565a5e;"></div>
<div style="left:356px;top:634px;width:13px;height:13px;background:#2e3236;"></div>
<svg style="left:178px;top:650px;" width="17" height="2" viewBox="0 0 17 2"><rect x="0" y="0" width="2" height="2" fill="#7a7d81"/><rect x="3" y="0" width="2" height="2" fill="#7a7d81"/><rect x="6" y="0" width="2" height="2" fill="#7a7d81"/><rect x="9" y="0" width="2" height="2" fill="#7a7d81"/><rect x="12" y="0" width="2" height="2" fill="#7a7d81"/><rect x="15" y="0" width="2" height="2" fill="#7a7d81"/></svg>
<svg style="left:373px;top:600px;" width="2" height="17" viewBox="0 0 2 17"><rect x="0" y="0" width="2" height="2" fill="#7a7d81"/><rect x="0" y="3" width="2" height="2" fill="#7a7d81"/><rect x="0" y="6" width="2" height="2" fill="#7a7d81"/><rect x="0" y="9" width="2" height="2" fill="#7a7d81"/><rect x="0" y="12" width="2" height="2" fill="#7a7d81"/><rect x="0" y="15" width="2" height="2" fill="#7a7d81"/></svg>
<span class="t" style="left:4px;top:655px;line-height:20px;font-size:13.2px;color:#eff0f1;letter-spacing:-0.1px;">Layers</span>
<svg style="left:343px;top:658px;" width="11" height="11" viewBox="0 0 11 11"><path d="M1.8 0.5H9.2L10.5 1.8V9.2L9.2 10.5H1.8L0.5 9.2V1.8Z" fill="none" stroke="#8f8e89" stroke-width="1"/><path d="M0.5 0.5L2 2M10.5 0.5L9 2M0.5 10.5L2 9M10.5 10.5L9 9" stroke="#8f8e89" stroke-width="0.6"/><path d="M4.5 4.5V2.5H8.5V6.5H6.5" fill="none" stroke="#8f8e89" stroke-width="0.9"/><rect x="2.5" y="4.5" width="4" height="4" fill="none" stroke="#8f8e89" stroke-width="0.9"/></svg>
<svg style="left:357px;top:658px;" width="11" height="11" viewBox="0 0 11 11"><path d="M1.8 0.5H9.2L10.5 1.8V9.2L9.2 10.5H1.8L0.5 9.2V1.8Z" fill="none" stroke="#8f8e89" stroke-width="1"/><path d="M0.5 0.5L2 2M10.5 0.5L9 2M0.5 10.5L2 9M10.5 10.5L9 9" stroke="#8f8e89" stroke-width="0.6"/><path d="M2.8 2.8L8.2 8.2M8.2 2.8L2.8 8.2" stroke="#8f8e89" stroke-width="1.7"/></svg>
<svg style="left:8.0px;top:681.0px;" width="16" height="16" viewBox="0 0 16 16"><path d="M1.5 7L6 3.5L11 8L6.5 11.5Z" fill="#f2c230"/><path d="M1.5 7L3.5 5.4L8.5 9.9L6.5 11.5Z" fill="#5a8fd0"/><path d="M1 9L6 13.5L7.5 12L2.5 7.8Z" fill="#d42a2a"/><path d="M14.5 1.5L9.5 7.5" stroke="#c8922a" stroke-width="1.8" stroke-linecap="round"/><path d="M6.5 9L9 6.5L12 9.5L9 13.5Z" fill="#e8c88a" stroke="#b98a3a" stroke-width="0.5"/></svg>
<svg style="left:33.0px;top:681.0px;" width="16" height="16" viewBox="0 0 16 16"><path d="M1.5 7V14.5H9" fill="none" stroke="#9a9c9e" stroke-width="0.9"/><rect x="3.5" y="3.5" width="9" height="10" fill="#e6e6e6" stroke="#bcbcbc" stroke-width="0.5"/><path d="M6 1.5V10M8.5 3.5V10M6 1.5C6 0 8.5 0 8.5 1.5" fill="none" stroke="#3f6da8" stroke-width="1"/><rect x="9.5" y="10" width="6" height="6" rx="0.8" fill="#5da462"/><path d="M12.5 11.2V14.8M10.7 13H14.3" stroke="#e6f4e6" stroke-width="1.3"/></svg>
<svg style="left:58.0px;top:681.0px;" width="16" height="16" viewBox="0 0 16 16"><path d="M0.8 8C3.5 3.6 10.5 3.2 14 8C10.5 12 4 12.2 0.8 8Z" fill="#f2f2f2" stroke="#8f9194" stroke-width="0.5"/><circle cx="7.4" cy="7.6" r="3.1" fill="#5a8fd0"/><circle cx="7.2" cy="7.2" r="1.3" fill="#1f2f45"/><path d="M1 5.6C4 2.4 10 2 13.6 5" fill="none" stroke="#6d7073" stroke-width="0.7"/><path d="M11.5 13.2H16L13.75 15.6Z" fill="#8d9093"/></svg>
<svg style="left:83.0px;top:681.0px;" width="16" height="16" viewBox="0 0 16 16"><rect x="1.5" y="1" width="13" height="1.8" fill="#f8e43d"/><path d="M1.5 3.2H14.5L9.6 8.6V14L6.6 12V8.6Z" fill="#6a9fd8" stroke="#4d84c0" stroke-width="0.5" stroke-linejoin="round"/></svg>
<svg style="left:109.0px;top:681.0px;" width="16" height="16" viewBox="0 0 16 16"><text x="0" y="11.5" font-family="Liberation Sans, sans-serif" font-size="17" fill="#7c3c88">ε</text><rect x="8" y="8.5" width="7.5" height="7.5" fill="#d9d9d9" stroke="#b0b0b0" stroke-width="0.5"/><path d="M9.5 10.2H14L12.4 12.4V15H11.1V12.4Z" fill="#8a8a8a"/></svg>
<svg style="left:144.5px;top:681.0px;" width="16" height="16" viewBox="0 0 16 16"><path d="M1.5 2.2H9.5M2.5 2.2V13.4H4.5M2.5 7.7H4.5" stroke="#d0d0d0" stroke-width="0.9" fill="none"/><rect x="4.5" y="6" width="3.4" height="3.4" fill="#f6a01a"/><rect x="4.5" y="11.6" width="3.4" height="3.4" fill="#f6a01a"/><rect x="5.4" y="6.9" width="1.2" height="1.2" fill="#fde9a8"/><rect x="5.4" y="12.5" width="1.2" height="1.2" fill="#fde9a8"/><path d="M11.5 15.5L15.5 10.5H12.9V1H10.1V10.5H7.5Z" fill="#6496d0" stroke="#4f80b8" stroke-width="0.4"/></svg>
<svg style="left:169.5px;top:681.0px;" width="16" height="16" viewBox="0 0 16 16"><path d="M1.5 2.2H9.5M2.5 2.2V13.4H4.5M2.5 7.7H4.5" stroke="#d0d0d0" stroke-width="0.9" fill="none"/><rect x="4.5" y="6" width="3.4" height="3.4" fill="#f6a01a"/><rect x="4.5" y="11.6" width="3.4" height="3.4" fill="#f6a01a"/><rect x="5.4" y="6.9" width="1.2" height="1.2" fill="#fde9a8"/><rect x="5.4" y="12.5" width="1.2" height="1.2" fill="#fde9a8"/><path d="M11.5 0.5L15.5 5.5H12.9V15H10.1V5.5H7.5Z" fill="#6496d0" stroke="#4f80b8" stroke-width="0.4"/></svg>
<svg style="left:194.5px;top:681.0px;" width="16" height="16" viewBox="0 0 16 16"><rect x="1.5" y="1" width="11.5" height="11.5" fill="#ededeb" stroke="#cfcfcd" stroke-width="0.6"/><rect x="9.8" y="10.2" width="6" height="5.4" rx="1" fill="#ee3a4a"/><rect x="10.9" y="12.3" width="3.8" height="1.3" fill="#ffffff"/></svg>
<svg style="left:130.5px;top:687.0px;" width="7" height="4" viewBox="0 0 7 4"><path d="M0 0H7L3.5 4Z" fill="#9a9c9e"/></svg>
<div style="left:1px;top:706px;width:354px;height:341.5px;background:#232629;"></div>
<div style="left:1px;top:906px;width:354px;height:20px;background:#1f4a63;"></div>
<div style="left:44px;top:708px;width:16px;height:16px;background:#8a8a8a;"></div>
<span class="t" style="left:66px;top:707px;line-height:20px;font-size:13.2px;color:#eff0f1;">0</span>
<div style="left:44px;top:728px;width:16px;height:16px;background:#f8f8f8;"></div>
<span class="t" style="left:66px;top:727px;line-height:20px;font-size:13.2px;color:#eff0f1;letter-spacing:-0.34px;">36</span>
<svg style="left:7.0px;top:753.7px;" width="8" height="4" viewBox="0 0 8 4"><path d="M0 0H8L4.0 4Z" fill="#9a9c9e"/></svg>
<div style="left:24px;top:749px;width:14px;height:14px;background:#22262a;box-sizing:border-box;border:1px solid #272b2f;"></div>
<svg style="left:44.0px;top:748.0px;" width="16" height="16" viewBox="0 0 16 16"><rect x="2.10" y="2.40" width="4.33" height="4.17" fill="#2c4059"/><rect x="6.43" y="2.40" width="4.33" height="4.17" fill="#a6c5e6"/><rect x="10.76" y="2.40" width="4.33" height="4.17" fill="#2c4059"/><rect x="2.10" y="6.57" width="4.33" height="4.17" fill="#a6c5e6"/><rect x="6.43" y="6.57" width="4.33" height="4.17" fill="#2c4059"/><rect x="10.76" y="6.57" width="4.33" height="4.17" fill="#a6c5e6"/><rect x="2.10" y="10.74" width="4.33" height="4.17" fill="#2c4059"/><rect x="6.43" y="10.74" width="4.33" height="4.17" fill="#a6c5e6"/></svg>
<span class="t" style="left:67px;top:746.3px;line-height:20px;font-size:13.2px;color:#c4c6c8;font-style:italic;-webkit-text-stroke:0.4px #c4c6c8;">Rasterized</span>
<div style="left:44px;top:768px;width:16px;height:16px;background:#000000;"></div>
<span class="t" style="left:66px;top:767px;line-height:20px;font-size:13.2px;color:#eff0f1;">0</span>
<div style="left:44px;top:788px;width:16px;height:16px;background:#ffffff;"></div>
<span class="t" style="left:66px;top:787px;line-height:20px;font-size:13.2px;color:#eff0f1;letter-spacing:-0.34px;">36</span>
<div style="left:24px;top:809px;width:14px;height:14px;background:#22262a;box-sizing:border-box;border:1px solid #272b2f;"></div>
<div style="left:44px;top:808px;width:16px;height:16px;background:#e9744a;"></div>
<span class="t" style="left:67px;top:806.3px;line-height:20px;font-size:13.2px;color:#c4c6c8;letter-spacing:0.28px;font-style:italic;-webkit-text-stroke:0.4px #c4c6c8;">Reprojected-bathymetry</span>
<svg style="left:339px;top:810.7px;" width="13" height="8" viewBox="0 0 13 8"><path d="M0.5 7V1.5H12.5V7" fill="none" stroke="#4a4e52" stroke-width="1"/><path d="M0 7.5H13" stroke="#3b3f43" stroke-dasharray="1 1"/></svg>
<div style="left:24px;top:829px;width:14px;height:14px;background:#22262a;box-sizing:border-box;border:1px solid #272b2f;"></div>
<div style="left:44px;top:836px;width:16px;height:1px;background:#9b6bb0;"></div>
<span class="t" style="left:67px;top:826.3px;line-height:20px;font-size:13.2px;color:#c4c6c8;letter-spacing:-0.11px;font-style:italic;-webkit-text-stroke:0.4px #c4c6c8;">Lines</span>
<svg style="left:339px;top:830.7px;" width="13" height="8" viewBox="0 0 13 8"><path d="M0.5 7V1.5H12.5V7" fill="none" stroke="#4a4e52" stroke-width="1"/><path d="M0 7.5H13" stroke="#3b3f43" stroke-dasharray="1 1"/></svg>
<div style="left:24px;top:849px;width:14px;height:14px;background:#22262a;box-sizing:border-box;border:1px solid #272b2f;"></div>
<div style="left:44px;top:848px;width:16px;height:16px;background:#e8b32f;"></div>
<span class="t" style="left:67px;top:846.3px;line-height:20px;font-size:13.2px;color:#c4c6c8;letter-spacing:0.16px;font-style:italic;-webkit-text-stroke:0.4px #c4c6c8;">reprojected_study_area</span>
<div style="left:24px;top:869px;width:14px;height:14px;background:#22262a;box-sizing:border-box;border:1px solid #272b2f;"></div>
<div style="left:44px;top:868px;width:16px;height:16px;background:#bf4a50;"></div>
<span class="t" style="left:67px;top:866.3px;line-height:20px;font-size:13.2px;color:#c4c6c8;letter-spacing:0.1px;font-style:italic;-webkit-text-stroke:0.4px #c4c6c8;">Reprojected_study-area</span>
<svg style="left:339px;top:870.7px;" width="13" height="8" viewBox="0 0 13 8"><path d="M0.5 7V1.5H12.5V7" fill="none" stroke="#4a4e52" stroke-width="1"/><path d="M0 7.5H13" stroke="#3b3f43" stroke-dasharray="1 1"/></svg>
<div style="left:24px;top:889px;width:14px;height:14px;background:#22262a;box-sizing:border-box;border:1px solid #272b2f;"></div>
<div style="left:44px;top:888px;width:16px;height:16px;background:#ec6f8e;"></div>
<span class="t" style="left:67px;top:886.3px;line-height:20px;font-size:13.2px;color:#c4c6c8;letter-spacing:0.12px;font-style:italic;-webkit-text-stroke:0.4px #c4c6c8;">Bathymetrie_1_m_Isolinien</span>
<div style="left:24px;top:909px;width:14px;height:14px;background:#1c1f22;"></div>
<svg style="left:24px;top:909px;" width="14" height="14" viewBox="0 0 14 14"><path d="M3 7.2L5.8 10.8L11.2 2.8" fill="none" stroke="#000" stroke-width="1.8"/></svg>
<svg style="left:43.0px;top:907.0px;" width="18" height="18" viewBox="0 0 18 18"><path d="M0.5 10.5H17.5" stroke="#d9a62a" stroke-width="1"/><g transform="scale(0.75)"><g transform="translate(17.5 1.5) rotate(116.6)"><rect x="0" y="-2.6" width="2.82" height="5.2" fill="#f4f4f4" stroke="#9a9a9a" stroke-width="0.4"/><rect x="2.82" y="-2.6" width="15.50" height="5.2" fill="#c8743a"/><rect x="2.82" y="-0.91" width="15.50" height="1.82" fill="#e8a070"/><path d="M18.31 -2.6L23.48 0L18.31 2.6Z" fill="#dcdcdc" stroke="#b9a982" stroke-width="0.3"/><path d="M21.60 -0.94L23.48 0L21.60 0.94Z" fill="#6ab0e0"/></g></g></svg>
<span class="t" style="left:66px;top:907px;line-height:20px;font-size:13.2px;color:#ffffff;letter-spacing:0.13px;-webkit-text-stroke:0.4px #ffffff;text-decoration:underline;text-underline-offset:2px;text-decoration-thickness:1px;">merged_simplify_reprojected_study_area</span>
<div style="left:24px;top:929px;width:14px;height:14px;background:#22262a;box-sizing:border-box;border:1px solid #272b2f;"></div>
<div style="left:44px;top:936px;width:16px;height:1px;background:#e0507c;"></div>
<span class="t" style="left:67px;top:926.3px;line-height:20px;font-size:13.2px;color:#c4c6c8;letter-spacing:0.21px;font-style:italic;-webkit-text-stroke:0.4px #c4c6c8;">Merged</span>
<svg style="left:339px;top:930.7px;" width="13" height="8" viewBox="0 0 13 8"><path d="M0.5 7V1.5H12.5V7" fill="none" stroke="#4a4e52" stroke-width="1"/><path d="M0 7.5H13" stroke="#3b3f43" stroke-dasharray="1 1"/></svg>
<div style="left:24px;top:949px;width:14px;height:14px;background:#22262a;box-sizing:border-box;border:1px solid #272b2f;"></div>
<div style="left:44px;top:956px;width:16px;height:1px;background:#f08a1d;"></div>
<span class="t" style="left:67px;top:946.3px;line-height:20px;font-size:13.2px;color:#c4c6c8;letter-spacing:0.17px;font-style:italic;-webkit-text-stroke:0.4px #c4c6c8;">simplify_reprojected_study_area</span>
<div style="left:24px;top:969px;width:14px;height:14px;background:#22262a;box-sizing:border-box;border:1px solid #272b2f;"></div>
<svg style="left:43.0px;top:967.0px;" width="18" height="18" viewBox="0 0 18 18"><path d="M0.5 10.5H17.5" stroke="#e8d52f" stroke-width="1"/><g transform="scale(0.75)"><g transform="translate(17.5 1.5) rotate(116.6)"><rect x="0" y="-2.6" width="2.82" height="5.2" fill="#f4f4f4" stroke="#9a9a9a" stroke-width="0.4"/><rect x="2.82" y="-2.6" width="15.50" height="5.2" fill="#e0c828"/><rect x="2.82" y="-0.91" width="15.50" height="1.82" fill="#f8ee78"/><path d="M18.31 -2.6L23.48 0L18.31 2.6Z" fill="#dcdcdc" stroke="#b9a982" stroke-width="0.3"/><path d="M21.60 -0.94L23.48 0L21.60 0.94Z" fill="#f4f4f4"/></g></g></svg>
<span class="t" style="left:67px;top:966.3px;line-height:20px;font-size:13.2px;color:#c4c6c8;letter-spacing:0.18px;font-style:italic;-webkit-text-stroke:0.4px #c4c6c8;">Simplified</span>
<svg style="left:339px;top:970.7px;" width="13" height="8" viewBox="0 0 13 8"><path d="M0.5 7V1.5H12.5V7" fill="none" stroke="#4a4e52" stroke-width="1"/><path d="M0 7.5H13" stroke="#3b3f43" stroke-dasharray="1 1"/></svg>
<div style="left:24px;top:989px;width:14px;height:14px;background:#22262a;box-sizing:border-box;border:1px solid #272b2f;"></div>
<div style="left:44px;top:996px;width:16px;height:1px;background:#d63a3a;"></div>
<span class="t" style="left:67px;top:986.3px;line-height:20px;font-size:13.2px;color:#c4c6c8;letter-spacing:0.19px;font-style:italic;-webkit-text-stroke:0.4px #c4c6c8;">Contours</span>
<svg style="left:7.0px;top:1013.7px;" width="8" height="4" viewBox="0 0 8 4"><path d="M0 0H8L4.0 4Z" fill="#9a9c9e"/></svg>
<div style="left:24px;top:1009px;width:14px;height:14px;background:#22262a;box-sizing:border-box;border:1px solid #272b2f;"></div>
<svg style="left:44.0px;top:1008.0px;" width="16" height="16" viewBox="0 0 16 16"><rect x="2.10" y="2.40" width="4.33" height="4.17" fill="#2c4059"/><rect x="6.43" y="2.40" width="4.33" height="4.17" fill="#a6c5e6"/><rect x="10.76" y="2.40" width="4.33" height="4.17" fill="#2c4059"/><rect x="2.10" y="6.57" width="4.33" height="4.17" fill="#a6c5e6"/><rect x="6.43" y="6.57" width="4.33" height="4.17" fill="#2c4059"/><rect x="10.76" y="6.57" width="4.33" height="4.17" fill="#a6c5e6"/><rect x="2.10" y="10.74" width="4.33" height="4.17" fill="#2c4059"/><rect x="6.43" y="10.74" width="4.33" height="4.17" fill="#a6c5e6"/></svg>
<span class="t" style="left:67px;top:1006.3px;line-height:20px;font-size:13.2px;color:#c4c6c8;letter-spacing:0.17px;font-style:italic;-webkit-text-stroke:0.4px #c4c6c8;">Reprojected</span>
<div style="left:44px;top:1028px;width:16px;height:16px;background:#8a8a8a;"></div>
<span class="t" style="left:66px;top:1027px;line-height:20px;font-size:13.2px;color:#eff0f1;">0</span>
<div style="left:356px;top:706px;width:13px;height:342px;background:#3a3d41;"></div>
<div style="left:356px;top:707px;width:13px;height:13px;background:#35393d;box-sizing:border-box;border:1px solid #585c60;"></div>
<svg style="left:358.5px;top:711.3px;" width="8" height="4.4" viewBox="0 0 9 5"><path d="M0 5H9L4.5 0Z" fill="#bfc1c3"/></svg>
<div style="left:356px;top:1034px;width:13px;height:13px;background:#35393d;box-sizing:border-box;border:1px solid #585c60;"></div>
<svg style="left:358.5px;top:1038.3px;" width="8" height="4.4" viewBox="0 0 9 5"><path d="M0 0H9L4.5 5Z" fill="#bfc1c3"/></svg>
<div style="left:356px;top:797px;width:13px;height:128px;background:#42464a;box-sizing:border-box;border:1px solid #565a5e;"></div>
<span class="t" style="left:1457px;top:167px;line-height:20px;font-size:13.2px;color:#eff0f1;letter-spacing:0.16px;">Processing Toolbox</span>
<svg style="left:1893px;top:170px;" width="11" height="11" viewBox="0 0 11 11"><path d="M1.8 0.5H9.2L10.5 1.8V9.2L9.2 10.5H1.8L0.5 9.2V1.8Z" fill="none" stroke="#8f8e89" stroke-width="1"/><path d="M0.5 0.5L2 2M10.5 0.5L9 2M0.5 10.5L2 9M10.5 10.5L9 9" stroke="#8f8e89" stroke-width="0.6"/><path d="M4.5 4.5V2.5H8.5V6.5H6.5" fill="none" stroke="#8f8e89" stroke-width="0.9"/><rect x="2.5" y="4.5" width="4" height="4" fill="none" stroke="#8f8e89" stroke-width="0.9"/></svg>
<svg style="left:1907px;top:170px;" width="11" height="11" viewBox="0 0 11 11"><path d="M1.8 0.5H9.2L10.5 1.8V9.2L9.2 10.5H1.8L0.5 9.2V1.8Z" fill="none" stroke="#8f8e89" stroke-width="1"/><path d="M0.5 0.5L2 2M10.5 0.5L9 2M0.5 10.5L2 9M10.5 10.5L9 9" stroke="#8f8e89" stroke-width="0.6"/><path d="M2.8 2.8L8.2 8.2M8.2 2.8L2.8 8.2" stroke="#8f8e89" stroke-width="1.7"/></svg>
<svg style="left:1461.0px;top:193.0px;" width="16" height="16" viewBox="0 0 16 16"><path d="M7.07 5.00L9.60 5.00" stroke="#e0141e" stroke-width="1.93"/><path d="M6.46 6.46L8.25 8.25" stroke="#e0141e" stroke-width="1.93"/><path d="M5.00 7.07L5.00 9.60" stroke="#e0141e" stroke-width="1.93"/><path d="M3.54 6.46L1.75 8.25" stroke="#e0141e" stroke-width="1.93"/><path d="M2.93 5.00L0.40 5.00" stroke="#e0141e" stroke-width="1.93"/><path d="M3.54 3.54L1.75 1.75" stroke="#e0141e" stroke-width="1.93"/><path d="M5.00 2.93L5.00 0.40" stroke="#e0141e" stroke-width="1.93"/><path d="M6.46 3.54L8.25 1.75" stroke="#e0141e" stroke-width="1.93"/><circle cx="5" cy="5" r="2.53" fill="none" stroke="#e0141e" stroke-width="1.56"/><path d="M13.03 8.00L14.90 8.00" stroke="#8a8d90" stroke-width="1.43"/><path d="M12.58 9.08L13.90 10.40" stroke="#8a8d90" stroke-width="1.43"/><path d="M11.50 9.53L11.50 11.40" stroke="#8a8d90" stroke-width="1.43"/><path d="M10.42 9.08L9.10 10.40" stroke="#8a8d90" stroke-width="1.43"/><path d="M9.97 8.00L8.10 8.00" stroke="#8a8d90" stroke-width="1.43"/><path d="M10.42 6.92L9.10 5.60" stroke="#8a8d90" stroke-width="1.43"/><path d="M11.50 6.47L11.50 4.60" stroke="#8a8d90" stroke-width="1.43"/><path d="M12.58 6.92L13.90 5.60" stroke="#8a8d90" stroke-width="1.43"/><circle cx="11.5" cy="8" r="1.87" fill="none" stroke="#8a8d90" stroke-width="1.16"/><path d="M8.55 12.40L10.20 12.40" stroke="#5a8fd0" stroke-width="1.26"/><path d="M8.15 13.35L9.32 14.52" stroke="#5a8fd0" stroke-width="1.26"/><path d="M7.20 13.75L7.20 15.40" stroke="#5a8fd0" stroke-width="1.26"/><path d="M6.25 13.35L5.08 14.52" stroke="#5a8fd0" stroke-width="1.26"/><path d="M5.85 12.40L4.20 12.40" stroke="#5a8fd0" stroke-width="1.26"/><path d="M6.25 11.45L5.08 10.28" stroke="#5a8fd0" stroke-width="1.26"/><path d="M7.20 11.05L7.20 9.40" stroke="#5a8fd0" stroke-width="1.26"/><path d="M8.15 11.45L9.32 10.28" stroke="#5a8fd0" stroke-width="1.26"/><circle cx="7.2" cy="12.4" r="1.65" fill="none" stroke="#5a8fd0" stroke-width="1.02"/></svg>
<svg style="left:1486.0px;top:193.0px;" width="16" height="16" viewBox="0 0 16 16"><g transform="scale(0.64) translate(0 0.5)"><path d="M11.8 1.5C8.5 1.5 7 2.8 7 4.8V7.5H12.2V8.5H4.8C2.6 8.5 1.2 10 1.2 12.6C1.2 15.4 2.6 17 4.6 17H6.8V14.2C6.8 12.4 8.2 11 10 11H14.6C16 11 17 10 17 8.6V4.8C17 2.8 15.2 1.5 11.8 1.5Z" fill="#3a78b0"/><circle cx="9.3" cy="4.3" r="0.9" fill="#e6eef6"/><path d="M12.2 23C15.5 23 17 21.7 17 19.7V17H11.8V16H19.2C21.4 16 22.8 14.5 22.8 11.9C22.8 9.1 21.4 7.5 19.4 7.5H17.2V10.3C17.2 12.1 15.8 13.5 14 13.5H9.4C8 13.5 7 14.5 7 15.9V19.7C7 21.7 8.8 23 12.2 23Z" fill="#fbd040"/><circle cx="14.7" cy="20.2" r="0.9" fill="#7a6514"/></g></svg>
<svg style="left:1511.0px;top:193.0px;" width="16" height="16" viewBox="0 0 16 16"><circle cx="8" cy="8" r="7" fill="#f2f2f2" stroke="#cfd1d3" stroke-width="0.8"/><path d="M8 3.4V8.3L11 10.4" fill="none" stroke="#8a8d90" stroke-width="1.1"/></svg>
<svg style="left:1536.0px;top:193.0px;" width="16" height="16" viewBox="0 0 16 16"><path d="M3 1H10.5L13.5 4V15H3Z" fill="#f4f4f4" stroke="#d2d2d2" stroke-width="0.5"/><path d="M10.5 1V4H13.5" fill="#dcdcdc"/><path d="M4.6 5.4H10M4.6 7.8H12M4.6 10.2H12M4.6 12.6H10.5" stroke="#b5b5b5" stroke-width="1.2"/></svg>
<svg style="left:1567.0px;top:193.0px;" width="16" height="16" viewBox="0 0 16 16"><rect x="1" y="1.5" width="10" height="9.5" rx="0.8" fill="#f8e43d" stroke="#d4b81e" stroke-width="0.5"/><g transform="scale(0.62) translate(3 3)"><g transform="translate(21 3) rotate(115.3)"><rect x="0" y="-2.3" width="2.39" height="4.6" fill="#f4f4f4" stroke="#9a9a9a" stroke-width="0.4"/><rect x="2.39" y="-2.3" width="13.14" height="4.6" fill="#d9c02a"/><rect x="2.39" y="-0.80" width="13.14" height="1.61" fill="#f8ea6a"/><path d="M15.53 -2.3L19.91 0L15.53 2.3Z" fill="#dcdcdc" stroke="#b9a982" stroke-width="0.3"/><path d="M18.31 -0.83L19.91 0L18.31 0.83Z" fill="#5a5a5a"/></g></g></svg>
<svg style="left:1600.0px;top:193.0px;" width="16" height="16" viewBox="0 0 16 16"><path d="M2.2 3.4C2.6 1.6 4.6 0.6 6.6 1.2L4.6 3.2L5.2 5L7 5.6L9 3.6C9.6 5.6 8.6 7.4 6.8 8L5 7.6Z" fill="#f4f4f4" stroke="#b4b4b4" stroke-width="0.4"/><path d="M7.4 6L14 13" stroke="#8a6d1c" stroke-width="3.2" stroke-linecap="round"/><path d="M7.6 6.2L13.8 12.8" stroke="#f0dc8a" stroke-width="1.9" stroke-linecap="round"/></svg>
<svg style="left:1473.5px;top:206.5px;" width="5" height="3" viewBox="0 0 5 3"><path d="M0 0H5L2.5 3Z" fill="#8d9093"/></svg>
<svg style="left:1498.5px;top:206.5px;" width="5" height="3" viewBox="0 0 5 3"><path d="M0 0H5L2.5 3Z" fill="#8d9093"/></svg>
<div style="left:1561px;top:195px;width:1px;height:13px;background:#3c4045;"></div>
<div style="left:1592px;top:195px;width:1px;height:13px;background:#3c4045;"></div>
<div style="left:1453px;top:217px;width:466px;height:26px;background:#232629;border-radius:3px;"></div>
<svg style="left:1461px;top:223.5px;" width="14" height="14" viewBox="0 0 14 14"><circle cx="5.5" cy="5.5" r="4.1" fill="none" stroke="#a9abad" stroke-width="1.2"/><path d="M8.5 8.5L12.6 12.6" stroke="#a9abad" stroke-width="1.5"/></svg>
<span class="t" style="left:1482px;top:221px;line-height:20px;font-size:13.2px;color:#7f8386;letter-spacing:-0.2px;">Search...</span>
<div style="left:1453px;top:244px;width:453px;height:262px;background:#232629;"></div>
<svg style="left:1462.0px;top:250.0px;" width="4" height="8" viewBox="0 0 4 8"><path d="M0 0V8L4 4.0Z" fill="#a6a8aa"/></svg>
<svg style="left:1477.0px;top:246.0px;" width="16" height="16" viewBox="0 0 16 16"><circle cx="8" cy="8" r="7" fill="#f2f2f2" stroke="#cfd1d3" stroke-width="0.8"/><path d="M8 3.4V8.3L11 10.4" fill="none" stroke="#8a8d90" stroke-width="1.1"/></svg>
<span class="t" style="left:1499px;top:245px;line-height:20px;font-size:13.2px;color:#eff0f1;letter-spacing:0.03px;">Recently used</span>
<svg style="left:1462.0px;top:270.0px;" width="4" height="8" viewBox="0 0 4 8"><path d="M0 0V8L4 4.0Z" fill="#a6a8aa"/></svg>
<svg style="left:1477.5px;top:266.8px;" width="15" height="15" viewBox="0 0 24 24"><circle cx="11.6" cy="11.4" r="8.7" fill="none" stroke="url(#gq)" stroke-width="4.5"/><g transform="translate(11.4 11.2) rotate(45)"><path d="M2.6 -2.3H16.6V2.3H2.6Z" fill="#5f9e35"/><path d="M2.6 -2.3H16.6V-0.4H2.6Z" fill="#86bd4c"/><path d="M-3.4 0L1.6 -2.3V2.3Z" fill="#f47b1c"/><path d="M1.4 -2.3H3V2.3H1.4Z" fill="#f8cf3a"/><path d="M-3.4 0L1.6 -2.3V-0.6Z" fill="#f9a04a"/></g></svg>
<span class="t" style="left:1499px;top:265px;line-height:20px;font-size:13.2px;color:#eff0f1;letter-spacing:0.31px;">Cartography</span>
<svg style="left:1462.0px;top:290.0px;" width="4" height="8" viewBox="0 0 4 8"><path d="M0 0V8L4 4.0Z" fill="#a6a8aa"/></svg>
<svg style="left:1477.5px;top:286.8px;" width="15" height="15" viewBox="0 0 24 24"><circle cx="11.6" cy="11.4" r="8.7" fill="none" stroke="url(#gq)" stroke-width="4.5"/><g transform="translate(11.4 11.2) rotate(45)"><path d="M2.6 -2.3H16.6V2.3H2.6Z" fill="#5f9e35"/><path d="M2.6 -2.3H16.6V-0.4H2.6Z" fill="#86bd4c"/><path d="M-3.4 0L1.6 -2.3V2.3Z" fill="#f47b1c"/><path d="M1.4 -2.3H3V2.3H1.4Z" fill="#f8cf3a"/><path d="M-3.4 0L1.6 -2.3V-0.6Z" fill="#f9a04a"/></g></svg>
<span class="t" style="left:1499px;top:285px;line-height:20px;font-size:13.2px;color:#eff0f1;letter-spacing:0.07px;">Database</span>
<svg style="left:1462.0px;top:310.0px;" width="4" height="8" viewBox="0 0 4 8"><path d="M0 0V8L4 4.0Z" fill="#a6a8aa"/></svg>
<svg style="left:1477.5px;top:306.8px;" width="15" height="15" viewBox="0 0 24 24"><circle cx="11.6" cy="11.4" r="8.7" fill="none" stroke="url(#gq)" stroke-width="4.5"/><g transform="translate(11.4 11.2) rotate(45)"><path d="M2.6 -2.3H16.6V2.3H2.6Z" fill="#5f9e35"/><path d="M2.6 -2.3H16.6V-0.4H2.6Z" fill="#86bd4c"/><path d="M-3.4 0L1.6 -2.3V2.3Z" fill="#f47b1c"/><path d="M1.4 -2.3H3V2.3H1.4Z" fill="#f8cf3a"/><path d="M-3.4 0L1.6 -2.3V-0.6Z" fill="#f9a04a"/></g></svg>
<span class="t" style="left:1499px;top:305px;line-height:20px;font-size:13.2px;color:#eff0f1;letter-spacing:0.12px;">File tools</span>
<svg style="left:1462.0px;top:330.0px;" width="4" height="8" viewBox="0 0 4 8"><path d="M0 0V8L4 4.0Z" fill="#a6a8aa"/></svg>
<svg style="left:1477.5px;top:326.8px;" width="15" height="15" viewBox="0 0 24 24"><circle cx="11.6" cy="11.4" r="8.7" fill="none" stroke="url(#gq)" stroke-width="4.5"/><g transform="translate(11.4 11.2) rotate(45)"><path d="M2.6 -2.3H16.6V2.3H2.6Z" fill="#5f9e35"/><path d="M2.6 -2.3H16.6V-0.4H2.6Z" fill="#86bd4c"/><path d="M-3.4 0L1.6 -2.3V2.3Z" fill="#f47b1c"/><path d="M1.4 -2.3H3V2.3H1.4Z" fill="#f8cf3a"/><path d="M-3.4 0L1.6 -2.3V-0.6Z" fill="#f9a04a"/></g></svg>
<span class="t" style="left:1499px;top:325px;line-height:20px;font-size:13.2px;color:#eff0f1;letter-spacing:0.49px;">Interpolation</span>
<svg style="left:1462.0px;top:350.0px;" width="4" height="8" viewBox="0 0 4 8"><path d="M0 0V8L4 4.0Z" fill="#a6a8aa"/></svg>
<svg style="left:1477.5px;top:346.8px;" width="15" height="15" viewBox="0 0 24 24"><circle cx="11.6" cy="11.4" r="8.7" fill="none" stroke="url(#gq)" stroke-width="4.5"/><g transform="translate(11.4 11.2) rotate(45)"><path d="M2.6 -2.3H16.6V2.3H2.6Z" fill="#5f9e35"/><path d="M2.6 -2.3H16.6V-0.4H2.6Z" fill="#86bd4c"/><path d="M-3.4 0L1.6 -2.3V2.3Z" fill="#f47b1c"/><path d="M1.4 -2.3H3V2.3H1.4Z" fill="#f8cf3a"/><path d="M-3.4 0L1.6 -2.3V-0.6Z" fill="#f9a04a"/></g></svg>
<span class="t" style="left:1499px;top:345px;line-height:20px;font-size:13.2px;color:#eff0f1;letter-spacing:0.13px;">Layer tools</span>
<svg style="left:1462.0px;top:370.0px;" width="4" height="8" viewBox="0 0 4 8"><path d="M0 0V8L4 4.0Z" fill="#a6a8aa"/></svg>
<svg style="left:1477.5px;top:366.8px;" width="15" height="15" viewBox="0 0 24 24"><circle cx="11.6" cy="11.4" r="8.7" fill="none" stroke="url(#gq)" stroke-width="4.5"/><g transform="translate(11.4 11.2) rotate(45)"><path d="M2.6 -2.3H16.6V2.3H2.6Z" fill="#5f9e35"/><path d="M2.6 -2.3H16.6V-0.4H2.6Z" fill="#86bd4c"/><path d="M-3.4 0L1.6 -2.3V2.3Z" fill="#f47b1c"/><path d="M1.4 -2.3H3V2.3H1.4Z" fill="#f8cf3a"/><path d="M-3.4 0L1.6 -2.3V-0.6Z" fill="#f9a04a"/></g></svg>
<span class="t" style="left:1499px;top:365px;line-height:20px;font-size:13.2px;color:#eff0f1;letter-spacing:0.21px;">Network analysis</span>
<svg style="left:1462.0px;top:390.0px;" width="4" height="8" viewBox="0 0 4 8"><path d="M0 0V8L4 4.0Z" fill="#a6a8aa"/></svg>
<svg style="left:1477.5px;top:386.8px;" width="15" height="15" viewBox="0 0 24 24"><circle cx="11.6" cy="11.4" r="8.7" fill="none" stroke="url(#gq)" stroke-width="4.5"/><g transform="translate(11.4 11.2) rotate(45)"><path d="M2.6 -2.3H16.6V2.3H2.6Z" fill="#5f9e35"/><path d="M2.6 -2.3H16.6V-0.4H2.6Z" fill="#86bd4c"/><path d="M-3.4 0L1.6 -2.3V2.3Z" fill="#f47b1c"/><path d="M1.4 -2.3H3V2.3H1.4Z" fill="#f8cf3a"/><path d="M-3.4 0L1.6 -2.3V-0.6Z" fill="#f9a04a"/></g></svg>
<span class="t" style="left:1499px;top:385px;line-height:20px;font-size:13.2px;color:#eff0f1;letter-spacing:-0.01px;">Raster analysis</span>
<svg style="left:1462.0px;top:410.0px;" width="4" height="8" viewBox="0 0 4 8"><path d="M0 0V8L4 4.0Z" fill="#a6a8aa"/></svg>
<svg style="left:1477.5px;top:406.8px;" width="15" height="15" viewBox="0 0 24 24"><circle cx="11.6" cy="11.4" r="8.7" fill="none" stroke="url(#gq)" stroke-width="4.5"/><g transform="translate(11.4 11.2) rotate(45)"><path d="M2.6 -2.3H16.6V2.3H2.6Z" fill="#5f9e35"/><path d="M2.6 -2.3H16.6V-0.4H2.6Z" fill="#86bd4c"/><path d="M-3.4 0L1.6 -2.3V2.3Z" fill="#f47b1c"/><path d="M1.4 -2.3H3V2.3H1.4Z" fill="#f8cf3a"/><path d="M-3.4 0L1.6 -2.3V-0.6Z" fill="#f9a04a"/></g></svg>
<span class="t" style="left:1499px;top:405px;line-height:20px;font-size:13.2px;color:#eff0f1;letter-spacing:0.12px;">Raster terrain analysis</span>
<svg style="left:1462.0px;top:430.0px;" width="4" height="8" viewBox="0 0 4 8"><path d="M0 0V8L4 4.0Z" fill="#a6a8aa"/></svg>
<svg style="left:1477.5px;top:426.8px;" width="15" height="15" viewBox="0 0 24 24"><circle cx="11.6" cy="11.4" r="8.7" fill="none" stroke="url(#gq)" stroke-width="4.5"/><g transform="translate(11.4 11.2) rotate(45)"><path d="M2.6 -2.3H16.6V2.3H2.6Z" fill="#5f9e35"/><path d="M2.6 -2.3H16.6V-0.4H2.6Z" fill="#86bd4c"/><path d="M-3.4 0L1.6 -2.3V2.3Z" fill="#f47b1c"/><path d="M1.4 -2.3H3V2.3H1.4Z" fill="#f8cf3a"/><path d="M-3.4 0L1.6 -2.3V-0.6Z" fill="#f9a04a"/></g></svg>
<span class="t" style="left:1499px;top:425px;line-height:20px;font-size:13.2px;color:#eff0f1;letter-spacing:0.14px;">Raster tools</span>
<svg style="left:1462.0px;top:450.0px;" width="4" height="8" viewBox="0 0 4 8"><path d="M0 0V8L4 4.0Z" fill="#a6a8aa"/></svg>
<svg style="left:1477.5px;top:446.8px;" width="15" height="15" viewBox="0 0 24 24"><circle cx="11.6" cy="11.4" r="8.7" fill="none" stroke="url(#gq)" stroke-width="4.5"/><g transform="translate(11.4 11.2) rotate(45)"><path d="M2.6 -2.3H16.6V2.3H2.6Z" fill="#5f9e35"/><path d="M2.6 -2.3H16.6V-0.4H2.6Z" fill="#86bd4c"/><path d="M-3.4 0L1.6 -2.3V2.3Z" fill="#f47b1c"/><path d="M1.4 -2.3H3V2.3H1.4Z" fill="#f8cf3a"/><path d="M-3.4 0L1.6 -2.3V-0.6Z" fill="#f9a04a"/></g></svg>
<span class="t" style="left:1499px;top:445px;line-height:20px;font-size:13.2px;color:#eff0f1;letter-spacing:0.15px;">Vector analysis</span>
<svg style="left:1462.0px;top:470.0px;" width="4" height="8" viewBox="0 0 4 8"><path d="M0 0V8L4 4.0Z" fill="#a6a8aa"/></svg>
<svg style="left:1477.5px;top:466.8px;" width="15" height="15" viewBox="0 0 24 24"><circle cx="11.6" cy="11.4" r="8.7" fill="none" stroke="url(#gq)" stroke-width="4.5"/><g transform="translate(11.4 11.2) rotate(45)"><path d="M2.6 -2.3H16.6V2.3H2.6Z" fill="#5f9e35"/><path d="M2.6 -2.3H16.6V-0.4H2.6Z" fill="#86bd4c"/><path d="M-3.4 0L1.6 -2.3V2.3Z" fill="#f47b1c"/><path d="M1.4 -2.3H3V2.3H1.4Z" fill="#f8cf3a"/><path d="M-3.4 0L1.6 -2.3V-0.6Z" fill="#f9a04a"/></g></svg>
<span class="t" style="left:1499px;top:465px;line-height:20px;font-size:13.2px;color:#eff0f1;letter-spacing:0.27px;">Vector creation</span>
<svg style="left:1462.0px;top:490.0px;" width="4" height="8" viewBox="0 0 4 8"><path d="M0 0V8L4 4.0Z" fill="#a6a8aa"/></svg>
<svg style="left:1477.5px;top:486.8px;" width="15" height="15" viewBox="0 0 24 24"><circle cx="11.6" cy="11.4" r="8.7" fill="none" stroke="url(#gq)" stroke-width="4.5"/><g transform="translate(11.4 11.2) rotate(45)"><path d="M2.6 -2.3H16.6V2.3H2.6Z" fill="#5f9e35"/><path d="M2.6 -2.3H16.6V-0.4H2.6Z" fill="#86bd4c"/><path d="M-3.4 0L1.6 -2.3V2.3Z" fill="#f47b1c"/><path d="M1.4 -2.3H3V2.3H1.4Z" fill="#f8cf3a"/><path d="M-3.4 0L1.6 -2.3V-0.6Z" fill="#f9a04a"/></g></svg>
<span class="t" style="left:1499px;top:485px;line-height:20px;font-size:13.2px;color:#eff0f1;letter-spacing:0.21px;">Vector general</span>
<div style="left:1906px;top:244px;width:14px;height:262px;background:#31363b;"></div>
<div style="left:1906.5px;top:244px;width:13px;height:262px;background:#3a3d41;"></div>
<div style="left:1906.5px;top:245px;width:13px;height:13px;background:#35393d;box-sizing:border-box;border:1px solid #585c60;"></div>
<svg style="left:1909.0px;top:249.3px;" width="8" height="4.4" viewBox="0 0 9 5"><path d="M0 5H9L4.5 0Z" fill="#bfc1c3"/></svg>
<div style="left:1906.5px;top:492px;width:13px;height:13px;background:#35393d;box-sizing:border-box;border:1px solid #585c60;"></div>
<svg style="left:1909.0px;top:496.3px;" width="8" height="4.4" viewBox="0 0 9 5"><path d="M0 0H9L4.5 5Z" fill="#bfc1c3"/></svg>
<div style="left:1906.5px;top:258.5px;width:13px;height:159.5px;background:#42464a;box-sizing:border-box;border:1px solid #565a5e;"></div>
<svg style="left:1680px;top:509px;" width="17" height="2" viewBox="0 0 17 2"><rect x="0" y="0" width="2" height="2" fill="#7a7d81"/><rect x="3" y="0" width="2" height="2" fill="#7a7d81"/><rect x="6" y="0" width="2" height="2" fill="#7a7d81"/><rect x="9" y="0" width="2" height="2" fill="#7a7d81"/><rect x="12" y="0" width="2" height="2" fill="#7a7d81"/><rect x="15" y="0" width="2" height="2" fill="#7a7d81"/></svg>
<svg style="left:1450px;top:600px;" width="2" height="17" viewBox="0 0 2 17"><rect x="0" y="0" width="2" height="2" fill="#7a7d81"/><rect x="0" y="3" width="2" height="2" fill="#7a7d81"/><rect x="0" y="6" width="2" height="2" fill="#7a7d81"/><rect x="0" y="9" width="2" height="2" fill="#7a7d81"/><rect x="0" y="12" width="2" height="2" fill="#7a7d81"/><rect x="0" y="15" width="2" height="2" fill="#7a7d81"/></svg>
<span class="t" style="left:1457px;top:514px;line-height:20px;font-size:13.2px;color:#eff0f1;letter-spacing:0.12px;">Identify Results</span>
<svg style="left:1893px;top:517px;" width="11" height="11" viewBox="0 0 11 11"><path d="M1.8 0.5H9.2L10.5 1.8V9.2L9.2 10.5H1.8L0.5 9.2V1.8Z" fill="none" stroke="#8f8e89" stroke-width="1"/><path d="M0.5 0.5L2 2M10.5 0.5L9 2M0.5 10.5L2 9M10.5 10.5L9 9" stroke="#8f8e89" stroke-width="0.6"/><path d="M4.5 4.5V2.5H8.5V6.5H6.5" fill="none" stroke="#8f8e89" stroke-width="0.9"/><rect x="2.5" y="4.5" width="4" height="4" fill="none" stroke="#8f8e89" stroke-width="0.9"/></svg>
<svg style="left:1907px;top:517px;" width="11" height="11" viewBox="0 0 11 11"><path d="M1.8 0.5H9.2L10.5 1.8V9.2L9.2 10.5H1.8L0.5 9.2V1.8Z" fill="none" stroke="#8f8e89" stroke-width="1"/><path d="M0.5 0.5L2 2M10.5 0.5L9 2M0.5 10.5L2 9M10.5 10.5L9 9" stroke="#8f8e89" stroke-width="0.6"/><path d="M2.8 2.8L8.2 8.2M8.2 2.8L2.8 8.2" stroke="#8f8e89" stroke-width="1.7"/></svg>
<div style="left:1540px;top:538px;width:22px;height:21.5px;background:#2e3237;box-sizing:border-box;border:1px solid #5a5e63;border-radius:3px;"></div>
<svg style="left:1461.0px;top:540.0px;" width="16" height="16" viewBox="0 0 16 16"><rect x="1.5" y="2" width="13" height="12.5" fill="#c9cbcd" stroke="#dcdcdc" stroke-width="0.6"/><rect x="3" y="4" width="3" height="2.4" fill="#eeeeee"/><rect x="7" y="4" width="6" height="2.4" fill="#eeeeee"/><rect x="3" y="9" width="3" height="2.4" fill="#eeeeee"/><rect x="7" y="9" width="6" height="2.4" fill="#eeeeee"/></svg>
<svg style="left:1492.5px;top:540.0px;" width="16" height="16" viewBox="0 0 16 16"><path d="M1.5 2.2H9.5M2.5 2.2V13.4H4.5M2.5 7.7H4.5" stroke="#d0d0d0" stroke-width="0.9" fill="none"/><rect x="4.5" y="6" width="3.4" height="3.4" fill="#f6a01a"/><rect x="4.5" y="11.6" width="3.4" height="3.4" fill="#f6a01a"/><rect x="5.4" y="6.9" width="1.2" height="1.2" fill="#fde9a8"/><rect x="5.4" y="12.5" width="1.2" height="1.2" fill="#fde9a8"/><path d="M11.5 15.5L15.5 10.5H12.9V1H10.1V10.5H7.5Z" fill="#6496d0" stroke="#4f80b8" stroke-width="0.4"/></svg>
<svg style="left:1517.5px;top:540.0px;" width="16" height="16" viewBox="0 0 16 16"><path d="M1.5 2.2H9.5M2.5 2.2V13.4H4.5M2.5 7.7H4.5" stroke="#d0d0d0" stroke-width="0.9" fill="none"/><rect x="4.5" y="6" width="3.4" height="3.4" fill="#f6a01a"/><rect x="4.5" y="11.6" width="3.4" height="3.4" fill="#f6a01a"/><rect x="5.4" y="6.9" width="1.2" height="1.2" fill="#fde9a8"/><rect x="5.4" y="12.5" width="1.2" height="1.2" fill="#fde9a8"/><path d="M11.5 0.5L15.5 5.5H12.9V15H10.1V5.5H7.5Z" fill="#6496d0" stroke="#4f80b8" stroke-width="0.4"/></svg>
<svg style="left:1543.0px;top:540.0px;" width="16" height="16" viewBox="0 0 16 16"><path d="M1.5 2.2H9.5M2.5 2.2V13.4H4.5M2.5 7.7H4.5" stroke="#8a8d90" stroke-width="0.9" fill="none"/><rect x="4.5" y="6" width="3.4" height="3.4" fill="#f6a01a"/><rect x="4.5" y="11.6" width="3.4" height="3.4" fill="#f6a01a"/><rect x="5.4" y="6.9" width="1.2" height="1.2" fill="#fde9a8"/><rect x="5.4" y="12.5" width="1.2" height="1.2" fill="#fde9a8"/><path d="M11.5 15.5L15.5 10.5H12.9V1H10.1V10.5H7.5Z" fill="#6496d0" stroke="#4f80b8" stroke-width="0.4"/><path d="M5.5 0.2L7.2 3.6L10.9 4.1L8.2 6.7L8.9 10.4L5.5 8.6L2.1 10.4L2.8 6.7L0.1 4.1L3.8 3.6Z" fill="#fcd41e" stroke="#f08a1a" stroke-width="0.7" stroke-linejoin="round"/></svg>
<svg style="left:1575.0px;top:540.0px;" width="16" height="16" viewBox="0 0 24 24"><rect x="2.5" y="2" width="13.5" height="13.5" fill="#f8e43d" stroke="#d4b81e" stroke-width="0.7"/><rect x="13.5" y="13" width="10.5" height="10.5" rx="2" fill="#d42a2a" stroke="#a81616" stroke-width="0.5"/><circle cx="18.75" cy="18.25" r="3.6" fill="none" stroke="#ffffff" stroke-width="1.4"/><path d="M16.3 20.7L21.2 15.8" stroke="#ffffff" stroke-width="1.4"/></svg>
<svg style="left:1606.5px;top:540.0px;" width="16" height="16" viewBox="0 0 16 16"><path d="M6 1.5H11L13.5 4V11.5H6Z" fill="#8d9093"/><path d="M2.5 4.5H8L10.5 7V14.5H2.5Z" fill="#a9acae" stroke="#8d9093" stroke-width="0.5"/><path d="M4 8.5H7M4 10.5H9M4 12.5H9" stroke="#c8cacc" stroke-width="0.8"/></svg>
<svg style="left:1632.0px;top:540.0px;" width="16" height="16" viewBox="0 0 16 16"><rect x="4" y="1.5" width="8" height="4" fill="#b8babc"/><rect x="1" y="5" width="14" height="7" rx="1.5" fill="#9a9da0"/><rect x="4" y="9.5" width="8" height="5" fill="#c8cacc" stroke="#8d9093" stroke-width="0.4"/></svg>
<svg style="left:1657.0px;top:540.0px;" width="16" height="16" viewBox="0 0 16 16"><rect x="2.5" y="2" width="12.5" height="11.5" fill="#e2e2e2" stroke="#f8f8f8" stroke-width="0.8" stroke-dasharray="1 1"/><circle cx="4.8" cy="4.8" r="3.8" fill="#6a9fd8"/><text x="4.8" y="7.3" text-anchor="middle" font-family="Liberation Serif, serif" font-style="italic" font-weight="bold" font-size="7" fill="#fff">i</text><g transform="translate(8 6.5) scale(0.68) rotate(-12)"><path d="M0 0L0 12L3 9.2L5.3 14L7.2 13L5 8.5L9 8.5Z" fill="#ffffff" stroke="#3a3a3a" stroke-width="0.7" stroke-linejoin="round"/></g></svg>
<svg style="left:1679.5px;top:546.0px;" width="7" height="4" viewBox="0 0 7 4"><path d="M0 0H7L3.5 4Z" fill="#9a9c9e"/></svg>
<div style="left:1485px;top:542px;width:1px;height:13px;background:#3c4045;"></div>
<div style="left:1567px;top:542px;width:1px;height:13px;background:#3c4045;"></div>
<div style="left:1599px;top:542px;width:1px;height:13px;background:#3c4045;"></div>
<div style="left:1453px;top:565px;width:466px;height:414px;background:#232629;"></div>
<div style="left:1454px;top:566px;width:465px;height:20px;background:linear-gradient(#3f4449,#34393e);"></div>
<div style="left:1453px;top:565px;width:466px;height:1px;background:#43474c;"></div>
<div style="left:1662px;top:566px;width:1px;height:20px;background:#50545a;"></div>
<span class="t" style="left:1456px;top:567px;line-height:20px;font-size:13.2px;color:#eff0f1;letter-spacing:0.08px;">Feature</span>
<span class="t" style="left:1666px;top:567px;line-height:20px;font-size:13.2px;color:#eff0f1;letter-spacing:0.05px;">Value</span>
<span class="t" style="left:1458px;top:988px;line-height:20px;font-size:13.2px;color:#eff0f1;letter-spacing:0.25px;">Mode</span>
<div style="left:1500px;top:985px;width:163px;height:24px;box-sizing:border-box;border:1px solid #5f6367;border-radius:3px;background:linear-gradient(#42474d,#383d42);"></div>
<span class="t" style="left:1504px;top:988px;line-height:20px;font-size:13.2px;color:#eff0f1;letter-spacing:0.21px;">Current layer</span>
<svg style="left:1649.0px;top:995.0px;" width="7" height="4" viewBox="0 0 7 4"><path d="M0 0H7L3.5 4Z" fill="#b0b2b4"/></svg>
<div style="left:1793px;top:990px;width:14px;height:14px;background:#25282c;border-radius:1px;"></div>
<span class="t" style="left:1812px;top:988px;line-height:20px;font-size:13.2px;color:#eff0f1;letter-spacing:0.42px;">Auto open form</span>
<span class="t" style="left:1458px;top:1020px;line-height:20px;font-size:13.2px;color:#6e7275;letter-spacing:-0.09px;">View</span>
<div style="left:1494px;top:1017px;width:77px;height:24px;box-sizing:border-box;border:1px solid #4c5055;border-radius:3px;background:linear-gradient(#3b4045,#353a3f);"></div>
<span class="t" style="left:1498px;top:1020px;line-height:20px;font-size:13.2px;color:#6e7275;letter-spacing:0.09px;">Tree</span>
<svg style="left:1557.0px;top:1027.0px;" width="7" height="4" viewBox="0 0 7 4"><path d="M0 0H7L3.5 4Z" fill="#5d6165"/></svg>
<div style="left:1873px;top:1017px;width:41px;height:24px;box-sizing:border-box;border:1px solid #5f6367;border-radius:3px;background:linear-gradient(#42474d,#383d42);"></div>
<span class="t" style="left:1879px;top:1020px;line-height:20px;font-size:13.2px;color:#eff0f1;letter-spacing:0.22px;">Help</span>
<div style="left:4px;top:1051px;width:237px;height:26px;background:#232629;border-radius:3px;"></div>
<svg style="left:12.5px;top:1056.5px;" width="14" height="14" viewBox="0 0 14 14"><circle cx="5.5" cy="5.5" r="4.1" fill="none" stroke="#c8cacc" stroke-width="1.3"/><path d="M8.5 8.5L12.5 12.5" stroke="#c8cacc" stroke-width="1.6"/></svg>
<span class="t" style="left:33px;top:1055px;line-height:20px;font-size:13.2px;color:#a9acae;letter-spacing:0.02px;">Type to locate (Ctrl+K)</span>
<span class="t" style="left:249px;top:1054.5px;line-height:20px;font-size:11.2px;color:#0b0d0e;letter-spacing:0.19px;">Validation finished (0 error(s) found).</span>
<span class="t" style="left:1077px;top:1054px;line-height:20px;font-size:11.5px;color:#eff0f1;letter-spacing:0.05px;">Coordinate:</span>
<div style="left:1141px;top:1052px;width:100px;height:24px;background:#232629;border-radius:3px;"></div>
<span class="t" style="left:1145px;top:1054px;line-height:20px;font-size:11.5px;color:#eff0f1;letter-spacing:-0.17px;">8.38822,55.04628</span>
<svg style="left:1245.0px;top:1055.0px;" width="16" height="16" viewBox="0 0 16 16"><ellipse cx="8.5" cy="9.5" rx="4" ry="5.4" transform="rotate(-30 8.5 9.5)" fill="#eaeaea" stroke="#4a4a4a" stroke-width="0.7"/><path d="M5.2 6.4L9 9.6M7.6 4.6L6.8 8" stroke="#4a4a4a" stroke-width="0.6"/><path d="M2 2L5 5M6 0.8L6.8 3.6M1 5.4L3.8 6.2" stroke="#e0e0e0" stroke-width="0.9"/></svg>
<span class="t" style="left:1274px;top:1054px;line-height:20px;font-size:11.5px;color:#eff0f1;letter-spacing:-0.56px;">Scale</span>
<div style="left:1304px;top:1052px;width:87px;height:24px;box-sizing:border-box;border:1px solid #44484d;border-radius:3px;background:#232629;"></div>
<div style="left:1372px;top:1053px;width:18px;height:22px;background:#3a3f44;border-radius:0 2px 2px 0;"></div>
<span class="t" style="left:1308px;top:1054px;line-height:20px;font-size:11.5px;color:#eff0f1;letter-spacing:-0.2px;">1:5739</span>
<svg style="left:1377.0px;top:1062.0px;" width="7" height="4" viewBox="0 0 7 4"><path d="M0 0H7L3.5 4Z" fill="#b0b2b4"/></svg>
<svg style="left:1402.0px;top:1056.0px;" width="16" height="16" viewBox="0 0 16 16"><path d="M4.6 8V5.4A3.4 3.4 0 0 1 11.4 5.4V8" fill="none" stroke="#9a9c9e" stroke-width="1.6"/><rect x="2.6" y="7.6" width="10.8" height="7.4" rx="1" fill="#a8aaac"/></svg>
<span class="t" style="left:1426px;top:1054.5px;line-height:20px;font-size:11.5px;color:#eff0f1;letter-spacing:0.08px;">Magnifier</span>
<div style="left:1478px;top:1052px;width:92px;height:24px;background:#232629;border-radius:3px;"></div>
<span class="t" style="left:1483px;top:1054.5px;line-height:20px;font-size:11.5px;color:#eff0f1;letter-spacing:-0.36px;">100%</span>
<span class="t" style="left:1580px;top:1054.5px;line-height:20px;font-size:11.5px;color:#eff0f1;letter-spacing:0.14px;">Rotation</span>
<div style="left:1633px;top:1052px;width:88px;height:24px;background:#232629;border-radius:3px;"></div>
<span class="t" style="left:1638px;top:1054px;line-height:20px;font-size:11.5px;color:#eff0f1;letter-spacing:-0.36px;">0,0 °</span>
<div style="left:1557px;top:1053px;width:13px;height:22px;background:#31363b;box-sizing:border-box;border:1px solid #3e4247;border-radius:0 3px 3px 0;"></div>
<svg style="left:1560px;top:1057px;" width="7" height="4" viewBox="0 0 7 4"><path d="M0 4H7L3.5 0Z" fill="#9a9c9e"/></svg>
<svg style="left:1560px;top:1067px;" width="7" height="4" viewBox="0 0 7 4"><path d="M0 0H7L3.5 4Z" fill="#9a9c9e"/></svg>
<div style="left:1708px;top:1053px;width:13px;height:22px;background:#31363b;box-sizing:border-box;border:1px solid #3e4247;border-radius:0 3px 3px 0;"></div>
<svg style="left:1711px;top:1057px;" width="7" height="4" viewBox="0 0 7 4"><path d="M0 4H7L3.5 0Z" fill="#9a9c9e"/></svg>
<svg style="left:1711px;top:1067px;" width="7" height="4" viewBox="0 0 7 4"><path d="M0 0H7L3.5 4Z" fill="#9a9c9e"/></svg>
<div style="left:1728px;top:1057px;width:14px;height:14px;background:#25282c;border-radius:1px;"></div>
<svg style="left:1728px;top:1057px;" width="14" height="14" viewBox="0 0 14 14"><path d="M3 7.5L5.7 11L11 2.5" fill="none" stroke="#fcfcfc" stroke-width="1.4"/></svg>
<span class="t" style="left:1747px;top:1054px;line-height:20px;font-size:11.5px;color:#eff0f1;letter-spacing:-0.12px;">Render</span>
<svg style="left:1800.0px;top:1056.0px;" width="16" height="16" viewBox="0 0 16 16"><circle cx="8" cy="8" r="6.6" fill="#e8e8e8" stroke="#8a8d90" stroke-width="0.7"/><ellipse cx="8" cy="8" rx="3" ry="6.6" fill="none" stroke="#8a8d90" stroke-width="0.7"/><path d="M1.4 8H14.6M8 1.4V14.6M2.6 4.6H13.4M2.6 11.4H13.4" stroke="#8a8d90" stroke-width="0.7"/><path d="M0.5 5L3 2.5M13 2.5L15.5 5M0.5 11L3 13.5M13 13.5L15.5 11" stroke="#d8d8d8" stroke-width="0.9"/></svg>
<span class="t" style="left:1819px;top:1054.5px;line-height:20px;font-size:11.5px;color:#eff0f1;letter-spacing:-0.64px;">EPSG:4326</span>
<svg style="left:1897.0px;top:1056.0px;" width="16" height="16" viewBox="0 0 16 16"><path d="M3.5 1.5H12.5C14.5 1.5 15.5 3 15.5 5V8C15.5 10 14.5 11.5 12.5 11.5H12L13 15L8.5 11.5H3.5C1.5 11.5 0.5 10 0.5 8V5C0.5 3 1.5 1.5 3.5 1.5Z" fill="#c8cacc"/><circle cx="4.6" cy="6.5" r="1.1" fill="#fff"/><circle cx="8" cy="6.5" r="1.1" fill="#fff"/><circle cx="11.4" cy="6.5" r="1.1" fill="#fff"/></svg>
</div>
</body></html>
